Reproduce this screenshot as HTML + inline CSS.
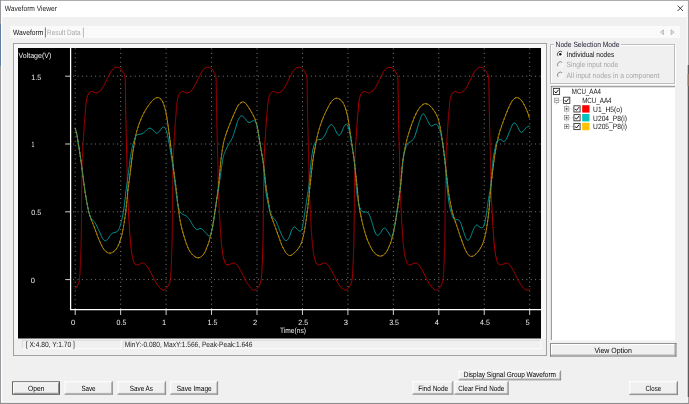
<!DOCTYPE html>
<html><head><meta charset="utf-8"><title>Waveform Viewer</title>
<style>
html,body{margin:0;padding:0;background:#f0f0f0;overflow:hidden}
svg{display:block;font-family:"Liberation Sans",sans-serif;will-change:transform}
text{font-family:"Liberation Sans",sans-serif;text-rendering:geometricPrecision}
</style></head>
<body>
<svg width="689" height="404" viewBox="0 0 689 404">
<rect x="0" y="0" width="689" height="404" fill="#f0f0f0" />
<rect x="0" y="0" width="689" height="17" fill="#ffffff" />
<rect x="0" y="0" width="2.2" height="404" fill="#ffffff" />
<rect x="686.8" y="0" width="2.2" height="404" fill="#ffffff" />
<rect x="0" y="401.6" width="689" height="2.4" fill="#ffffff" />
<rect x="0" y="0" width="689" height="0.8" fill="#999999" />
<rect x="0" y="0" width="0.9" height="404" fill="#8c9096" />
<rect x="0" y="24" width="1.0" height="42" fill="#5f7f9f" />
<rect x="687.9" y="0" width="1.1" height="404" fill="#a4a4a4" />
<rect x="687.7" y="65" width="1.3" height="332" fill="#5c5c5c" />
<rect x="687.7" y="74" width="1.3" height="12" fill="#8a7460" />
<rect x="0" y="402.8" width="689" height="1.2" fill="#909090" />
<text x="4.8" y="10.9" font-size="7.6" fill="#1a1a1a" textLength="52.2" lengthAdjust="spacingAndGlyphs" >Waveform Viewer</text>
<path d="M677.6 5.6 L683 11 M683 5.6 L677.6 11" stroke="#111" stroke-width="0.8" fill="none"/>
<rect x="10" y="26" width="670" height="12" fill="#fafafa" />
<text x="13.0" y="35.0" font-size="7.6" fill="#111" textLength="30.3" lengthAdjust="spacingAndGlyphs" >Waveform</text>
<line x1="45.4" y1="27.5" x2="45.4" y2="37.5" stroke="#555" stroke-width="0.8" />
<text x="47.0" y="35.0" font-size="7.6" fill="#a6a6a6" textLength="33.5" lengthAdjust="spacingAndGlyphs" >Result Data</text>
<line x1="83.4" y1="27.5" x2="83.4" y2="37.5" stroke="#aaa" stroke-width="0.8" />
<path d="M663.4 29.9 L660.6 32.2 L663.4 34.5 Z" fill="#f4f4f4" stroke="#8a8a8a" stroke-width="0.6"/>
<path d="M671.2 29.9 L674 32.2 L671.2 34.5 Z" fill="#f4f4f4" stroke="#8a8a8a" stroke-width="0.6"/>
<rect x="13.5" y="43.5" width="533" height="312" fill="#f0f0f0" stroke="#a0a0a0" stroke-width="1"/>
<rect x="14" y="44" width="532" height="295" fill="#f8f8f8" />
<rect x="18" y="48" width="523" height="290.5" fill="#000" />
<line x1="75.20" y1="48.5" x2="75.20" y2="309" stroke="#989898" stroke-width="0.9" stroke-dasharray="0.9 3.5"/>
<line x1="120.65" y1="48.5" x2="120.65" y2="309" stroke="#989898" stroke-width="0.9" stroke-dasharray="0.9 3.5"/>
<line x1="166.10" y1="48.5" x2="166.10" y2="309" stroke="#989898" stroke-width="0.9" stroke-dasharray="0.9 3.5"/>
<line x1="211.55" y1="48.5" x2="211.55" y2="309" stroke="#989898" stroke-width="0.9" stroke-dasharray="0.9 3.5"/>
<line x1="257.00" y1="48.5" x2="257.00" y2="309" stroke="#989898" stroke-width="0.9" stroke-dasharray="0.9 3.5"/>
<line x1="302.45" y1="48.5" x2="302.45" y2="309" stroke="#989898" stroke-width="0.9" stroke-dasharray="0.9 3.5"/>
<line x1="347.90" y1="48.5" x2="347.90" y2="309" stroke="#989898" stroke-width="0.9" stroke-dasharray="0.9 3.5"/>
<line x1="393.35" y1="48.5" x2="393.35" y2="309" stroke="#989898" stroke-width="0.9" stroke-dasharray="0.9 3.5"/>
<line x1="438.80" y1="48.5" x2="438.80" y2="309" stroke="#989898" stroke-width="0.9" stroke-dasharray="0.9 3.5"/>
<line x1="484.25" y1="48.5" x2="484.25" y2="309" stroke="#989898" stroke-width="0.9" stroke-dasharray="0.9 3.5"/>
<line x1="529.70" y1="48.5" x2="529.70" y2="309" stroke="#989898" stroke-width="0.9" stroke-dasharray="0.9 3.5"/>
<line x1="71" y1="279.60" x2="541" y2="279.60" stroke="#989898" stroke-width="0.9" stroke-dasharray="0.9 3.5" stroke-dashoffset="-2.2"/>
<line x1="71" y1="211.80" x2="541" y2="211.80" stroke="#989898" stroke-width="0.9" stroke-dasharray="0.9 3.5" stroke-dashoffset="-2.2"/>
<line x1="71" y1="144.00" x2="541" y2="144.00" stroke="#989898" stroke-width="0.9" stroke-dasharray="0.9 3.5" stroke-dashoffset="-2.2"/>
<line x1="71" y1="76.20" x2="541" y2="76.20" stroke="#989898" stroke-width="0.9" stroke-dasharray="0.9 3.5" stroke-dashoffset="-2.2"/>
<line x1="70.6" y1="48" x2="70.6" y2="310.1" stroke="#fff" stroke-width="1.25" />
<line x1="70" y1="309.5" x2="541" y2="309.5" stroke="#fff" stroke-width="1.25" />
<line x1="75.20" y1="310" x2="75.20" y2="315" stroke="#e8e8e8" stroke-width="0.9" />
<line x1="120.65" y1="310" x2="120.65" y2="315" stroke="#e8e8e8" stroke-width="0.9" />
<line x1="166.10" y1="310" x2="166.10" y2="315" stroke="#e8e8e8" stroke-width="0.9" />
<line x1="211.55" y1="310" x2="211.55" y2="315" stroke="#e8e8e8" stroke-width="0.9" />
<line x1="257.00" y1="310" x2="257.00" y2="315" stroke="#e8e8e8" stroke-width="0.9" />
<line x1="302.45" y1="310" x2="302.45" y2="315" stroke="#e8e8e8" stroke-width="0.9" />
<line x1="347.90" y1="310" x2="347.90" y2="315" stroke="#e8e8e8" stroke-width="0.9" />
<line x1="393.35" y1="310" x2="393.35" y2="315" stroke="#e8e8e8" stroke-width="0.9" />
<line x1="438.80" y1="310" x2="438.80" y2="315" stroke="#e8e8e8" stroke-width="0.9" />
<line x1="484.25" y1="310" x2="484.25" y2="315" stroke="#e8e8e8" stroke-width="0.9" />
<line x1="529.70" y1="310" x2="529.70" y2="315" stroke="#e8e8e8" stroke-width="0.9" />
<line x1="65.2" y1="279.60" x2="70" y2="279.60" stroke="#e8e8e8" stroke-width="0.9" />
<line x1="65.2" y1="211.80" x2="70" y2="211.80" stroke="#e8e8e8" stroke-width="0.9" />
<line x1="65.2" y1="144.00" x2="70" y2="144.00" stroke="#e8e8e8" stroke-width="0.9" />
<line x1="65.2" y1="76.20" x2="70" y2="76.20" stroke="#e8e8e8" stroke-width="0.9" />
<text x="18.5" y="58.1" font-size="7.6" fill="#f0f0f0" textLength="32.8" lengthAdjust="spacingAndGlyphs" >Voltage(V)</text>
<text x="31.2" y="79.6" font-size="7.6" fill="#f0f0f0" textLength="10.0" lengthAdjust="spacingAndGlyphs" >1.5</text>
<text x="31.5" y="147.4" font-size="7.6" fill="#f0f0f0" textLength="2.9" lengthAdjust="spacingAndGlyphs" >1</text>
<text x="31.2" y="215.2" font-size="7.6" fill="#f0f0f0" textLength="10.0" lengthAdjust="spacingAndGlyphs" >0.5</text>
<text x="30.8" y="283.0" font-size="7.6" fill="#f0f0f0" textLength="4.2" lengthAdjust="spacingAndGlyphs" >0</text>
<text x="71.1" y="324.6" font-size="7.6" fill="#f0f0f0" textLength="4.2" lengthAdjust="spacingAndGlyphs" >0</text>
<text x="116.6" y="324.6" font-size="7.6" fill="#f0f0f0" textLength="9.8" lengthAdjust="spacingAndGlyphs" >0.5</text>
<text x="162.0" y="324.6" font-size="7.6" fill="#f0f0f0" textLength="4.2" lengthAdjust="spacingAndGlyphs" >1</text>
<text x="207.5" y="324.6" font-size="7.6" fill="#f0f0f0" textLength="9.8" lengthAdjust="spacingAndGlyphs" >1.5</text>
<text x="252.9" y="324.6" font-size="7.6" fill="#f0f0f0" textLength="4.2" lengthAdjust="spacingAndGlyphs" >2</text>
<text x="298.3" y="324.6" font-size="7.6" fill="#f0f0f0" textLength="9.8" lengthAdjust="spacingAndGlyphs" >2.5</text>
<text x="343.8" y="324.6" font-size="7.6" fill="#f0f0f0" textLength="4.2" lengthAdjust="spacingAndGlyphs" >3</text>
<text x="389.2" y="324.6" font-size="7.6" fill="#f0f0f0" textLength="9.8" lengthAdjust="spacingAndGlyphs" >3.5</text>
<text x="434.7" y="324.6" font-size="7.6" fill="#f0f0f0" textLength="4.2" lengthAdjust="spacingAndGlyphs" >4</text>
<text x="480.1" y="324.6" font-size="7.6" fill="#f0f0f0" textLength="9.8" lengthAdjust="spacingAndGlyphs" >4.5</text>
<text x="525.6" y="324.6" font-size="7.6" fill="#f0f0f0" textLength="4.2" lengthAdjust="spacingAndGlyphs" >5</text>
<text x="280.0" y="333.1" font-size="7.6" fill="#f0f0f0" textLength="25.9" lengthAdjust="spacingAndGlyphs" >Time(ns)</text>
<g fill="none" stroke-width="1.0" stroke-linejoin="round" stroke-linecap="round">
<path d="M75.2 288.5 L75.9 287.7 L76.5 287.0 L77.1 286.1 L77.6 285.3 L78.0 284.4 L78.5 283.5 L78.8 282.5 L79.1 281.6 L79.2 280.6 L79.4 279.6 L79.5 278.6 L79.6 277.6 L79.7 276.6 L79.8 275.6 L79.9 274.6 L80.0 273.6 L80.0 272.6 L80.1 271.6 L80.1 270.6 L80.2 269.6 L80.2 268.6 L80.2 267.6 L80.3 266.6 L80.3 265.6 L80.4 264.6 L80.4 263.6 L80.5 262.6 L80.5 261.6 L80.5 260.6 L80.6 259.6 L80.6 258.6 L80.7 257.6 L80.7 256.6 L80.7 255.6 L80.8 254.6 L80.8 253.6 L80.8 252.6 L80.9 251.6 L80.9 250.6 L80.9 249.6 L81.0 248.6 L81.0 247.6 L81.0 246.6 L81.1 245.6 L81.1 244.6 L81.1 243.6 L81.1 242.6 L81.2 241.6 L81.2 240.6 L81.2 239.6 L81.2 238.6 L81.2 237.6 L81.3 236.6 L81.3 235.6 L81.3 234.6 L81.3 233.6 L81.3 232.6 L81.3 231.6 L81.3 230.6 L81.4 229.6 L81.4 228.6 L81.4 227.7 L81.4 226.7 L81.4 225.7 L81.4 224.7 L81.4 223.7 L81.4 222.7 L81.4 221.7 L81.4 220.7 L81.5 219.7 L81.5 218.7 L81.5 217.7 L81.5 216.7 L81.5 215.7 L81.5 214.7 L81.5 213.7 L81.5 212.7 L81.5 211.7 L81.5 210.7 L81.5 209.7 L81.5 208.7 L81.5 207.7 L81.5 206.7 L81.5 205.7 L81.6 204.7 L81.6 203.7 L81.6 202.7 L81.6 201.7 L81.6 200.7 L81.6 199.7 L81.6 198.7 L81.6 197.7 L81.6 196.7 L81.6 195.7 L81.6 194.7 L81.7 193.7 L81.7 192.7 L81.7 191.7 L81.7 190.7 L81.7 189.7 L81.7 188.7 L81.7 187.7 L81.7 186.7 L81.8 185.7 L81.8 184.7 L81.8 183.7 L81.8 182.7 L81.8 181.7 L81.8 180.7 L81.9 179.7 L81.9 178.7 L81.9 177.7 L81.9 176.7 L81.9 175.7 L81.9 174.7 L82.0 173.7 L82.0 172.7 L82.0 171.7 L82.0 170.7 L82.0 169.7 L82.1 168.7 L82.1 167.7 L82.1 166.7 L82.1 165.7 L82.2 164.7 L82.2 163.7 L82.2 162.7 L82.3 161.7 L82.3 160.7 L82.3 159.7 L82.3 158.7 L82.4 157.7 L82.4 156.7 L82.5 155.7 L82.5 154.7 L82.5 153.7 L82.6 152.7 L82.6 151.7 L82.7 150.7 L82.7 149.7 L82.8 148.7 L82.8 147.7 L82.9 146.7 L83.0 145.7 L83.0 144.7 L83.1 143.7 L83.1 142.7 L83.2 141.7 L83.3 140.7 L83.3 139.7 L83.4 138.7 L83.5 137.7 L83.5 136.7 L83.6 135.7 L83.7 134.7 L83.7 133.7 L83.8 132.7 L83.9 131.7 L83.9 130.7 L84.0 129.7 L84.0 128.7 L84.1 127.7 L84.2 126.7 L84.2 125.7 L84.3 124.7 L84.4 123.7 L84.4 122.7 L84.5 121.7 L84.6 120.7 L84.7 119.7 L84.7 118.7 L84.8 117.7 L84.9 116.7 L85.0 115.7 L85.1 114.7 L85.1 113.7 L85.2 112.8 L85.3 111.8 L85.4 110.8 L85.5 109.8 L85.6 108.8 L85.7 107.8 L85.7 106.8 L85.8 105.8 L85.9 104.8 L86.0 103.8 L86.1 102.8 L86.2 101.8 L86.4 100.8 L86.6 99.8 L86.8 98.9 L87.0 97.9 L87.2 96.9 L87.5 95.9 L87.9 95.0 L88.3 94.1 L88.9 93.2 L89.6 92.5 L90.4 91.9 L91.3 91.6 L92.2 91.6 L93.2 91.9 L94.1 92.4 L95.1 92.8 L96.1 92.9 L97.0 92.7 L97.9 92.4 L98.8 91.9 L99.7 91.4 L100.5 90.7 L101.1 89.9 L101.7 89.0 L102.3 88.2 L102.8 87.4 L103.3 86.5 L103.8 85.6 L104.2 84.8 L104.7 83.9 L105.2 83.0 L105.6 82.1 L106.1 81.2 L106.5 80.3 L106.9 79.4 L107.4 78.5 L107.8 77.6 L108.2 76.7 L108.7 75.8 L109.1 75.0 L109.6 74.1 L110.1 73.2 L110.5 72.3 L111.0 71.5 L111.6 70.7 L112.2 69.9 L112.9 69.2 L113.8 68.5 L114.7 67.9 L115.6 67.5 L116.5 67.3 L117.5 67.3 L118.4 67.5 L119.3 67.9 L120.2 68.5 L121.0 69.2 L121.7 70.0 L122.2 70.8 L122.7 71.7 L123.2 72.5 L123.7 73.4 L124.3 74.2 L124.7 75.1 L124.9 76.1 L125.1 77.1 L125.1 78.1 L125.2 79.1 L125.2 80.1 L125.3 81.1 L125.3 82.1 L125.3 83.1 L125.3 84.1 L125.3 85.1 L125.4 86.1 L125.4 87.1 L125.4 88.1 L125.4 89.1 L125.4 90.1 L125.4 91.1 L125.4 92.1 L125.4 93.1 L125.5 94.1 L125.5 95.1 L125.5 96.1 L125.5 97.1 L125.5 98.1 L125.5 99.1 L125.5 100.1 L125.6 101.1 L125.6 102.1 L125.6 103.1 L125.6 104.1 L125.6 105.1 L125.6 106.1 L125.6 107.1 L125.7 108.1 L125.7 109.1 L125.7 110.1 L125.7 111.1 L125.7 112.1 L125.7 113.1 L125.8 114.1 L125.8 115.1 L125.8 116.1 L125.8 117.1 L125.8 118.1 L125.9 119.1 L125.9 120.1 L125.9 121.1 L125.9 122.1 L126.0 123.1 L126.0 124.1 L126.0 125.1 L126.0 126.1 L126.0 127.1 L126.1 128.1 L126.1 129.1 L126.1 130.1 L126.1 131.1 L126.2 132.1 L126.2 133.1 L126.2 134.1 L126.2 135.1 L126.3 136.1 L126.3 137.1 L126.3 138.1 L126.3 139.1 L126.4 140.1 L126.4 141.1 L126.4 142.1 L126.4 143.1 L126.5 144.1 L126.5 145.1 L126.5 146.1 L126.5 147.0 L126.6 148.0 L126.6 149.0 L126.6 150.0 L126.6 151.0 L126.7 152.0 L126.7 153.0 L126.7 154.0 L126.8 155.0 L126.8 156.0 L126.8 157.0 L126.8 158.0 L126.9 159.0 L126.9 160.0 L126.9 161.0 L126.9 162.0 L127.0 163.0 L127.0 164.0 L127.0 165.0 L127.0 166.0 L127.0 167.0 L127.1 168.0 L127.1 169.0 L127.1 170.0 L127.1 171.0 L127.1 172.0 L127.1 173.0 L127.2 174.0 L127.2 175.0 L127.2 176.0 L127.2 177.0 L127.2 178.0 L127.2 179.0 L127.2 180.0 L127.3 181.0 L127.3 182.0 L127.3 183.0 L127.3 184.0 L127.4 185.0 L127.4 186.0 L127.4 187.0 L127.4 188.0 L127.5 189.0 L127.5 190.0 L127.5 191.0 L127.6 192.0 L127.6 193.0 L127.7 194.0 L127.7 195.0 L127.7 196.0 L127.8 197.0 L127.8 198.0 L127.9 199.0 L127.9 200.0 L128.0 201.0 L128.0 202.0 L128.1 203.0 L128.1 204.0 L128.2 205.0 L128.2 206.0 L128.3 207.0 L128.3 208.0 L128.4 209.0 L128.4 210.0 L128.5 211.0 L128.5 212.0 L128.6 213.0 L128.6 214.0 L128.7 215.0 L128.7 216.0 L128.8 217.0 L128.8 218.0 L128.9 219.0 L128.9 220.0 L129.0 221.0 L129.1 222.0 L129.1 223.0 L129.2 224.0 L129.2 225.0 L129.3 226.0 L129.3 227.0 L129.4 228.0 L129.5 229.0 L129.5 230.0 L129.6 231.0 L129.7 232.0 L129.7 233.0 L129.8 234.0 L129.9 235.0 L129.9 236.0 L130.0 237.0 L130.1 238.0 L130.2 239.0 L130.3 240.0 L130.3 241.0 L130.4 242.0 L130.5 243.0 L130.6 243.9 L130.7 244.9 L130.8 245.9 L130.9 246.9 L131.0 247.9 L131.1 248.9 L131.3 249.9 L131.4 250.9 L131.6 251.9 L131.7 252.9 L131.8 253.9 L132.0 254.9 L132.2 255.8 L132.4 256.8 L132.6 257.8 L132.8 258.8 L133.1 259.7 L133.4 260.7 L133.7 261.7 L134.0 262.6 L134.5 263.5 L135.1 264.3 L135.9 264.8 L136.8 265.0 L137.8 264.8 L138.8 264.5 L139.7 264.1 L140.6 263.6 L141.5 263.2 L142.4 263.0 L143.4 263.1 L144.3 263.5 L145.2 264.1 L145.9 264.8 L146.6 265.5 L147.2 266.3 L147.7 267.2 L148.2 268.0 L148.7 268.9 L149.2 269.7 L149.7 270.6 L150.2 271.5 L150.7 272.4 L151.2 273.2 L151.6 274.1 L152.1 275.0 L152.5 275.9 L152.9 276.8 L153.4 277.7 L153.8 278.6 L154.2 279.5 L154.7 280.4 L155.2 281.3 L155.6 282.2 L156.2 283.0 L156.7 283.9 L157.3 284.7 L157.9 285.5 L158.5 286.3 L159.1 287.1 L159.7 287.8 L160.4 288.5 L161.2 289.2 L162.1 289.8 L163.0 290.1 L163.9 290.1 L164.7 289.7 L165.5 289.0 L166.3 288.3 L166.9 287.5 L167.6 286.7 L168.1 285.9 L168.6 285.0 L169.1 284.1 L169.5 283.2 L169.8 282.3 L170.0 281.3 L170.2 280.3 L170.3 279.3 L170.4 278.3 L170.5 277.3 L170.6 276.3 L170.7 275.3 L170.8 274.4 L170.9 273.4 L170.9 272.4 L171.0 271.4 L171.0 270.4 L171.1 269.4 L171.1 268.4 L171.2 267.4 L171.2 266.4 L171.2 265.4 L171.3 264.4 L171.3 263.4 L171.4 262.4 L171.4 261.4 L171.5 260.4 L171.5 259.4 L171.5 258.4 L171.6 257.4 L171.6 256.4 L171.6 255.4 L171.7 254.4 L171.7 253.4 L171.7 252.4 L171.8 251.4 L171.8 250.4 L171.8 249.4 L171.9 248.4 L171.9 247.4 L171.9 246.4 L172.0 245.4 L172.0 244.4 L172.0 243.4 L172.0 242.4 L172.1 241.4 L172.1 240.4 L172.1 239.4 L172.1 238.4 L172.1 237.4 L172.2 236.4 L172.2 235.4 L172.2 234.4 L172.2 233.4 L172.2 232.4 L172.2 231.4 L172.2 230.4 L172.3 229.4 L172.3 228.4 L172.3 227.4 L172.3 226.4 L172.3 225.4 L172.3 224.4 L172.3 223.4 L172.3 222.4 L172.3 221.4 L172.3 220.4 L172.4 219.4 L172.4 218.4 L172.4 217.4 L172.4 216.4 L172.4 215.4 L172.4 214.4 L172.4 213.4 L172.4 212.4 L172.4 211.4 L172.4 210.4 L172.4 209.4 L172.4 208.4 L172.4 207.4 L172.4 206.4 L172.5 205.4 L172.5 204.4 L172.5 203.4 L172.5 202.4 L172.5 201.4 L172.5 200.4 L172.5 199.4 L172.5 198.4 L172.5 197.4 L172.5 196.4 L172.5 195.4 L172.5 194.4 L172.6 193.4 L172.6 192.4 L172.6 191.4 L172.6 190.4 L172.6 189.4 L172.6 188.4 L172.6 187.4 L172.6 186.4 L172.7 185.4 L172.7 184.4 L172.7 183.4 L172.7 182.4 L172.7 181.4 L172.7 180.4 L172.8 179.4 L172.8 178.4 L172.8 177.4 L172.8 176.4 L172.8 175.4 L172.8 174.4 L172.9 173.4 L172.9 172.4 L172.9 171.4 L172.9 170.4 L173.0 169.4 L173.0 168.4 L173.0 167.4 L173.0 166.4 L173.0 165.4 L173.1 164.4 L173.1 163.4 L173.1 162.4 L173.2 161.4 L173.2 160.4 L173.2 159.4 L173.3 158.4 L173.3 157.4 L173.3 156.4 L173.4 155.4 L173.4 154.4 L173.5 153.4 L173.5 152.4 L173.6 151.4 L173.6 150.4 L173.7 149.4 L173.7 148.4 L173.8 147.4 L173.8 146.4 L173.9 145.4 L173.9 144.4 L174.0 143.4 L174.1 142.4 L174.1 141.4 L174.2 140.4 L174.2 139.4 L174.3 138.4 L174.4 137.4 L174.4 136.4 L174.5 135.4 L174.6 134.4 L174.6 133.4 L174.7 132.4 L174.8 131.4 L174.8 130.4 L174.9 129.4 L175.0 128.4 L175.0 127.4 L175.1 126.4 L175.2 125.4 L175.2 124.4 L175.3 123.4 L175.4 122.4 L175.4 121.5 L175.5 120.5 L175.6 119.5 L175.7 118.5 L175.7 117.5 L175.8 116.5 L175.9 115.5 L176.0 114.5 L176.1 113.5 L176.1 112.5 L176.2 111.5 L176.3 110.5 L176.4 109.5 L176.5 108.5 L176.6 107.5 L176.7 106.5 L176.8 105.5 L176.8 104.5 L176.9 103.5 L177.0 102.5 L177.2 101.5 L177.3 100.6 L177.5 99.6 L177.7 98.6 L177.9 97.6 L178.2 96.7 L178.5 95.7 L178.9 94.7 L179.3 93.8 L179.9 93.0 L180.7 92.3 L181.5 91.8 L182.4 91.5 L183.4 91.6 L184.3 92.1 L185.3 92.5 L186.3 92.9 L187.2 92.9 L188.1 92.6 L189.1 92.3 L190.0 91.8 L190.8 91.2 L191.5 90.5 L192.2 89.7 L192.8 88.8 L193.3 88.0 L193.9 87.1 L194.3 86.3 L194.8 85.4 L195.3 84.5 L195.7 83.7 L196.2 82.8 L196.6 81.9 L197.1 81.0 L197.5 80.1 L198.0 79.2 L198.4 78.3 L198.8 77.4 L199.3 76.5 L199.7 75.6 L200.2 74.7 L200.6 73.8 L201.1 73.0 L201.6 72.1 L202.1 71.3 L202.6 70.5 L203.3 69.7 L204.1 69.0 L204.9 68.3 L205.8 67.8 L206.8 67.4 L207.7 67.3 L208.6 67.3 L209.6 67.6 L210.5 68.0 L211.4 68.7 L212.1 69.4 L212.7 70.2 L213.3 71.0 L213.7 71.9 L214.2 72.7 L214.8 73.6 L215.3 74.5 L215.7 75.4 L215.9 76.3 L216.0 77.3 L216.1 78.3 L216.1 79.3 L216.1 80.3 L216.2 81.3 L216.2 82.3 L216.2 83.3 L216.2 84.3 L216.2 85.3 L216.3 86.3 L216.3 87.3 L216.3 88.3 L216.3 89.3 L216.3 90.3 L216.3 91.3 L216.3 92.3 L216.3 93.3 L216.4 94.3 L216.4 95.3 L216.4 96.3 L216.4 97.3 L216.4 98.3 L216.4 99.3 L216.4 100.3 L216.5 101.3 L216.5 102.3 L216.5 103.3 L216.5 104.3 L216.5 105.3 L216.5 106.3 L216.5 107.3 L216.6 108.3 L216.6 109.3 L216.6 110.3 L216.6 111.3 L216.6 112.3 L216.6 113.3 L216.7 114.3 L216.7 115.3 L216.7 116.3 L216.7 117.3 L216.7 118.3 L216.8 119.3 L216.8 120.3 L216.8 121.3 L216.8 122.3 L216.9 123.3 L216.9 124.3 L216.9 125.3 L216.9 126.3 L216.9 127.3 L217.0 128.3 L217.0 129.3 L217.0 130.3 L217.0 131.3 L217.1 132.3 L217.1 133.3 L217.1 134.3 L217.1 135.3 L217.2 136.3 L217.2 137.3 L217.2 138.3 L217.2 139.3 L217.3 140.3 L217.3 141.3 L217.3 142.3 L217.3 143.3 L217.4 144.3 L217.4 145.3 L217.4 146.3 L217.4 147.3 L217.5 148.3 L217.5 149.3 L217.5 150.3 L217.6 151.3 L217.6 152.3 L217.6 153.3 L217.6 154.3 L217.7 155.3 L217.7 156.3 L217.7 157.3 L217.8 158.3 L217.8 159.3 L217.8 160.3 L217.8 161.3 L217.9 162.3 L217.9 163.3 L217.9 164.3 L217.9 165.3 L217.9 166.3 L218.0 167.3 L218.0 168.3 L218.0 169.3 L218.0 170.3 L218.0 171.3 L218.0 172.3 L218.0 173.3 L218.1 174.3 L218.1 175.3 L218.1 176.3 L218.1 177.3 L218.1 178.3 L218.1 179.3 L218.2 180.3 L218.2 181.3 L218.2 182.3 L218.2 183.3 L218.2 184.3 L218.3 185.3 L218.3 186.3 L218.3 187.3 L218.3 188.3 L218.4 189.3 L218.4 190.3 L218.4 191.3 L218.5 192.3 L218.5 193.3 L218.6 194.3 L218.6 195.3 L218.7 196.3 L218.7 197.3 L218.8 198.3 L218.8 199.3 L218.8 200.3 L218.9 201.3 L218.9 202.3 L219.0 203.3 L219.0 204.3 L219.1 205.3 L219.1 206.3 L219.2 207.3 L219.2 208.3 L219.3 209.3 L219.3 210.3 L219.4 211.3 L219.4 212.3 L219.5 213.3 L219.5 214.3 L219.6 215.3 L219.6 216.3 L219.7 217.3 L219.8 218.3 L219.8 219.3 L219.9 220.3 L219.9 221.3 L220.0 222.3 L220.0 223.3 L220.1 224.3 L220.1 225.3 L220.2 226.3 L220.2 227.3 L220.3 228.3 L220.4 229.3 L220.4 230.3 L220.5 231.3 L220.6 232.3 L220.6 233.2 L220.7 234.2 L220.8 235.2 L220.9 236.2 L220.9 237.2 L221.0 238.2 L221.1 239.2 L221.2 240.2 L221.3 241.2 L221.3 242.2 L221.4 243.2 L221.5 244.2 L221.6 245.2 L221.7 246.2 L221.8 247.2 L222.0 248.2 L222.1 249.2 L222.2 250.2 L222.4 251.2 L222.5 252.2 L222.6 253.1 L222.8 254.1 L222.9 255.1 L223.1 256.1 L223.3 257.1 L223.6 258.0 L223.8 259.0 L224.1 260.0 L224.4 261.0 L224.7 261.9 L225.0 262.9 L225.5 263.8 L226.2 264.5 L227.0 264.9 L228.0 265.0 L229.0 264.7 L229.9 264.4 L230.8 263.9 L231.8 263.5 L232.7 263.1 L233.6 263.0 L234.5 263.2 L235.5 263.6 L236.3 264.3 L237.0 265.0 L237.7 265.8 L238.2 266.6 L238.8 267.4 L239.3 268.3 L239.8 269.1 L240.3 270.0 L240.8 270.8 L241.3 271.7 L241.7 272.6 L242.2 273.5 L242.6 274.4 L243.1 275.3 L243.5 276.2 L244.0 277.1 L244.4 278.0 L244.8 278.9 L245.3 279.8 L245.7 280.7 L246.2 281.6 L246.7 282.4 L247.2 283.3 L247.8 284.1 L248.3 284.9 L248.9 285.7 L249.5 286.5 L250.1 287.3 L250.8 288.0 L251.5 288.7 L252.4 289.4 L253.2 289.9 L254.2 290.1 L255.0 290.0 L255.9 289.5 L256.6 288.8 L257.4 288.1 L258.0 287.3 L258.6 286.5 L259.2 285.7 L259.6 284.8 L260.1 283.9 L260.5 283.0 L260.8 282.0 L261.0 281.0 L261.1 280.1 L261.2 279.1 L261.4 278.1 L261.5 277.1 L261.6 276.1 L261.6 275.1 L261.7 274.1 L261.8 273.1 L261.8 272.1 L261.9 271.1 L261.9 270.1 L262.0 269.1 L262.0 268.1 L262.1 267.1 L262.1 266.1 L262.2 265.1 L262.2 264.1 L262.2 263.1 L262.3 262.1 L262.3 261.1 L262.4 260.1 L262.4 259.1 L262.4 258.1 L262.5 257.1 L262.5 256.1 L262.6 255.1 L262.6 254.1 L262.6 253.1 L262.7 252.1 L262.7 251.1 L262.7 250.1 L262.8 249.1 L262.8 248.1 L262.8 247.1 L262.8 246.1 L262.9 245.1 L262.9 244.1 L262.9 243.1 L263.0 242.1 L263.0 241.1 L263.0 240.1 L263.0 239.1 L263.0 238.1 L263.1 237.1 L263.1 236.1 L263.1 235.1 L263.1 234.1 L263.1 233.1 L263.1 232.1 L263.1 231.1 L263.2 230.1 L263.2 229.1 L263.2 228.1 L263.2 227.1 L263.2 226.1 L263.2 225.1 L263.2 224.1 L263.2 223.1 L263.2 222.1 L263.2 221.1 L263.2 220.1 L263.3 219.1 L263.3 218.1 L263.3 217.1 L263.3 216.1 L263.3 215.1 L263.3 214.1 L263.3 213.1 L263.3 212.1 L263.3 211.1 L263.3 210.1 L263.3 209.1 L263.3 208.1 L263.3 207.1 L263.3 206.1 L263.4 205.1 L263.4 204.1 L263.4 203.1 L263.4 202.1 L263.4 201.1 L263.4 200.1 L263.4 199.1 L263.4 198.1 L263.4 197.1 L263.4 196.1 L263.4 195.1 L263.5 194.1 L263.5 193.1 L263.5 192.1 L263.5 191.1 L263.5 190.1 L263.5 189.1 L263.5 188.1 L263.5 187.1 L263.6 186.1 L263.6 185.1 L263.6 184.1 L263.6 183.1 L263.6 182.1 L263.6 181.1 L263.6 180.1 L263.7 179.1 L263.7 178.1 L263.7 177.1 L263.7 176.1 L263.7 175.1 L263.8 174.1 L263.8 173.1 L263.8 172.1 L263.8 171.1 L263.8 170.1 L263.9 169.1 L263.9 168.1 L263.9 167.1 L263.9 166.1 L264.0 165.1 L264.0 164.1 L264.0 163.1 L264.0 162.1 L264.1 161.1 L264.1 160.1 L264.1 159.1 L264.2 158.1 L264.2 157.1 L264.2 156.1 L264.3 155.1 L264.3 154.1 L264.4 153.1 L264.4 152.1 L264.5 151.1 L264.5 150.1 L264.6 149.1 L264.6 148.1 L264.7 147.1 L264.7 146.1 L264.8 145.1 L264.9 144.1 L264.9 143.1 L265.0 142.1 L265.0 141.1 L265.1 140.1 L265.2 139.1 L265.2 138.1 L265.3 137.2 L265.4 136.2 L265.4 135.2 L265.5 134.2 L265.6 133.2 L265.6 132.2 L265.7 131.2 L265.8 130.2 L265.8 129.2 L265.9 128.2 L265.9 127.2 L266.0 126.2 L266.1 125.2 L266.1 124.2 L266.2 123.2 L266.3 122.2 L266.3 121.2 L266.4 120.2 L266.5 119.2 L266.6 118.2 L266.7 117.2 L266.7 116.2 L266.8 115.2 L266.9 114.2 L267.0 113.2 L267.1 112.2 L267.2 111.2 L267.2 110.2 L267.3 109.2 L267.4 108.2 L267.5 107.2 L267.6 106.2 L267.7 105.2 L267.8 104.2 L267.9 103.2 L268.0 102.3 L268.1 101.3 L268.3 100.3 L268.5 99.3 L268.7 98.3 L268.9 97.4 L269.2 96.4 L269.5 95.4 L269.9 94.5 L270.4 93.6 L271.0 92.8 L271.8 92.2 L272.6 91.7 L273.6 91.5 L274.5 91.7 L275.5 92.2 L276.5 92.7 L277.4 92.9 L278.4 92.8 L279.3 92.5 L280.2 92.2 L281.1 91.7 L281.9 91.0 L282.6 90.2 L283.3 89.4 L283.9 88.6 L284.4 87.7 L284.9 86.9 L285.4 86.0 L285.8 85.2 L286.3 84.3 L286.7 83.4 L287.2 82.5 L287.7 81.6 L288.1 80.7 L288.5 79.9 L289.0 79.0 L289.4 78.1 L289.8 77.2 L290.3 76.3 L290.7 75.4 L291.2 74.5 L291.7 73.6 L292.1 72.7 L292.6 71.9 L293.1 71.1 L293.7 70.3 L294.4 69.5 L295.2 68.8 L296.1 68.1 L297.0 67.7 L297.9 67.4 L298.8 67.3 L299.8 67.4 L300.7 67.7 L301.6 68.2 L302.5 68.9 L303.2 69.6 L303.8 70.4 L304.3 71.3 L304.8 72.1 L305.3 73.0 L305.8 73.8 L306.3 74.7 L306.7 75.6 L306.8 76.6 L306.9 77.6 L307.0 78.6 L307.0 79.6 L307.0 80.6 L307.1 81.6 L307.1 82.6 L307.1 83.6 L307.1 84.6 L307.1 85.6 L307.2 86.6 L307.2 87.6 L307.2 88.6 L307.2 89.6 L307.2 90.6 L307.2 91.6 L307.2 92.6 L307.3 93.6 L307.3 94.6 L307.3 95.6 L307.3 96.6 L307.3 97.6 L307.3 98.6 L307.3 99.6 L307.3 100.6 L307.4 101.6 L307.4 102.6 L307.4 103.6 L307.4 104.6 L307.4 105.6 L307.4 106.6 L307.4 107.6 L307.5 108.6 L307.5 109.6 L307.5 110.6 L307.5 111.6 L307.5 112.6 L307.6 113.6 L307.6 114.6 L307.6 115.6 L307.6 116.6 L307.6 117.6 L307.7 118.6 L307.7 119.6 L307.7 120.6 L307.7 121.6 L307.7 122.6 L307.8 123.6 L307.8 124.6 L307.8 125.6 L307.8 126.6 L307.9 127.6 L307.9 128.6 L307.9 129.6 L307.9 130.6 L307.9 131.6 L308.0 132.6 L308.0 133.6 L308.0 134.6 L308.0 135.6 L308.1 136.6 L308.1 137.6 L308.1 138.6 L308.1 139.6 L308.2 140.6 L308.2 141.6 L308.2 142.6 L308.2 143.6 L308.3 144.6 L308.3 145.6 L308.3 146.6 L308.4 147.6 L308.4 148.6 L308.4 149.6 L308.4 150.6 L308.5 151.6 L308.5 152.6 L308.5 153.6 L308.6 154.6 L308.6 155.6 L308.6 156.6 L308.6 157.6 L308.7 158.6 L308.7 159.6 L308.7 160.6 L308.7 161.6 L308.8 162.6 L308.8 163.6 L308.8 164.6 L308.8 165.6 L308.8 166.6 L308.9 167.6 L308.9 168.6 L308.9 169.6 L308.9 170.6 L308.9 171.6 L308.9 172.6 L308.9 173.6 L309.0 174.6 L309.0 175.6 L309.0 176.6 L309.0 177.6 L309.0 178.6 L309.0 179.6 L309.1 180.6 L309.1 181.6 L309.1 182.6 L309.1 183.6 L309.1 184.6 L309.2 185.6 L309.2 186.6 L309.2 187.6 L309.3 188.6 L309.3 189.6 L309.3 190.6 L309.4 191.6 L309.4 192.6 L309.4 193.6 L309.5 194.6 L309.5 195.6 L309.6 196.6 L309.6 197.6 L309.7 198.6 L309.7 199.6 L309.8 200.6 L309.8 201.6 L309.9 202.6 L309.9 203.6 L310.0 204.6 L310.0 205.6 L310.1 206.6 L310.1 207.6 L310.2 208.6 L310.2 209.6 L310.3 210.6 L310.3 211.6 L310.4 212.6 L310.4 213.6 L310.5 214.6 L310.5 215.5 L310.6 216.5 L310.6 217.5 L310.7 218.5 L310.7 219.5 L310.8 220.5 L310.8 221.5 L310.9 222.5 L310.9 223.5 L311.0 224.5 L311.0 225.5 L311.1 226.5 L311.2 227.5 L311.2 228.5 L311.3 229.5 L311.4 230.5 L311.4 231.5 L311.5 232.5 L311.6 233.5 L311.6 234.5 L311.7 235.5 L311.8 236.5 L311.9 237.5 L311.9 238.5 L312.0 239.5 L312.1 240.5 L312.2 241.5 L312.3 242.5 L312.3 243.5 L312.4 244.5 L312.5 245.5 L312.6 246.5 L312.8 247.5 L312.9 248.5 L313.0 249.4 L313.2 250.4 L313.3 251.4 L313.4 252.4 L313.6 253.4 L313.7 254.4 L313.9 255.4 L314.1 256.4 L314.3 257.3 L314.5 258.3 L314.8 259.3 L315.0 260.2 L315.3 261.2 L315.7 262.2 L316.1 263.1 L316.6 264.0 L317.3 264.6 L318.2 265.0 L319.1 264.9 L320.1 264.7 L321.1 264.3 L322.0 263.8 L322.9 263.4 L323.8 263.1 L324.8 263.0 L325.7 263.3 L326.6 263.8 L327.4 264.5 L328.1 265.2 L328.7 266.0 L329.3 266.8 L329.8 267.6 L330.3 268.5 L330.8 269.3 L331.3 270.2 L331.8 271.1 L332.3 272.0 L332.8 272.8 L333.2 273.7 L333.7 274.6 L334.1 275.5 L334.5 276.4 L335.0 277.3 L335.4 278.2 L335.8 279.1 L336.3 280.0 L336.7 280.9 L337.2 281.8 L337.7 282.7 L338.2 283.5 L338.8 284.3 L339.4 285.1 L340.0 286.0 L340.6 286.7 L341.2 287.5 L341.9 288.2 L342.7 288.9 L343.5 289.5 L344.4 290.0 L345.3 290.1 L346.2 289.9 L347.0 289.3 L347.7 288.6 L348.4 287.9 L349.1 287.1 L349.7 286.3 L350.2 285.5 L350.7 284.6 L351.1 283.6 L351.4 282.7 L351.7 281.8 L351.9 280.8 L352.1 279.8 L352.2 278.8 L352.3 277.8 L352.4 276.8 L352.5 275.8 L352.6 274.8 L352.6 273.8 L352.7 272.8 L352.8 271.8 L352.8 270.8 L352.9 269.8 L352.9 268.8 L352.9 267.8 L353.0 266.8 L353.0 265.8 L353.1 264.8 L353.1 263.8 L353.2 262.8 L353.2 261.8 L353.2 260.8 L353.3 259.8 L353.3 258.8 L353.4 257.8 L353.4 256.8 L353.4 255.8 L353.5 254.8 L353.5 253.8 L353.5 252.8 L353.6 251.8 L353.6 250.8 L353.6 249.8 L353.7 248.8 L353.7 247.8 L353.7 246.8 L353.8 245.8 L353.8 244.8 L353.8 243.8 L353.8 242.8 L353.9 241.8 L353.9 240.8 L353.9 239.8 L353.9 238.8 L353.9 237.8 L354.0 236.8 L354.0 235.8 L354.0 234.8 L354.0 233.8 L354.0 232.8 L354.0 231.8 L354.0 230.8 L354.1 229.8 L354.1 228.8 L354.1 227.8 L354.1 226.8 L354.1 225.8 L354.1 224.8 L354.1 223.8 L354.1 222.8 L354.1 221.8 L354.1 220.8 L354.2 219.8 L354.2 218.8 L354.2 217.8 L354.2 216.8 L354.2 215.8 L354.2 214.8 L354.2 213.8 L354.2 212.8 L354.2 211.8 L354.2 210.8 L354.2 209.8 L354.2 208.8 L354.2 207.8 L354.2 206.8 L354.2 205.8 L354.3 204.8 L354.3 203.8 L354.3 202.8 L354.3 201.8 L354.3 200.8 L354.3 199.8 L354.3 198.8 L354.3 197.8 L354.3 196.8 L354.3 195.8 L354.3 194.8 L354.4 193.8 L354.4 192.8 L354.4 191.8 L354.4 190.8 L354.4 189.8 L354.4 188.8 L354.4 187.8 L354.4 186.8 L354.5 185.8 L354.5 184.8 L354.5 183.8 L354.5 182.8 L354.5 181.8 L354.5 180.8 L354.5 179.8 L354.6 178.8 L354.6 177.8 L354.6 176.8 L354.6 175.8 L354.6 174.8 L354.7 173.8 L354.7 172.8 L354.7 171.8 L354.7 170.8 L354.7 169.8 L354.8 168.8 L354.8 167.8 L354.8 166.8 L354.8 165.8 L354.9 164.8 L354.9 163.8 L354.9 162.8 L354.9 161.8 L355.0 160.8 L355.0 159.8 L355.0 158.8 L355.1 157.8 L355.1 156.9 L355.1 155.9 L355.2 154.9 L355.2 153.9 L355.3 152.9 L355.3 151.9 L355.4 150.9 L355.4 149.9 L355.5 148.9 L355.5 147.9 L355.6 146.9 L355.7 145.9 L355.7 144.9 L355.8 143.9 L355.8 142.9 L355.9 141.9 L356.0 140.9 L356.0 139.9 L356.1 138.9 L356.1 137.9 L356.2 136.9 L356.3 135.9 L356.3 134.9 L356.4 133.9 L356.5 132.9 L356.5 131.9 L356.6 130.9 L356.7 129.9 L356.7 128.9 L356.8 127.9 L356.9 126.9 L356.9 125.9 L357.0 124.9 L357.1 123.9 L357.1 122.9 L357.2 121.9 L357.3 120.9 L357.3 119.9 L357.4 118.9 L357.5 117.9 L357.6 116.9 L357.7 115.9 L357.7 114.9 L357.8 113.9 L357.9 112.9 L358.0 111.9 L358.1 110.9 L358.2 110.0 L358.3 109.0 L358.3 108.0 L358.4 107.0 L358.5 106.0 L358.6 105.0 L358.7 104.0 L358.8 103.0 L358.9 102.0 L359.1 101.0 L359.2 100.0 L359.4 99.1 L359.6 98.1 L359.9 97.1 L360.2 96.1 L360.5 95.2 L360.9 94.2 L361.4 93.4 L362.1 92.6 L362.9 92.0 L363.8 91.6 L364.7 91.5 L365.7 91.8 L366.6 92.3 L367.6 92.7 L368.6 92.9 L369.5 92.8 L370.5 92.4 L371.4 92.0 L372.2 91.5 L373.0 90.8 L373.7 90.0 L374.3 89.2 L374.9 88.4 L375.4 87.5 L375.9 86.7 L376.4 85.8 L376.8 84.9 L377.3 84.1 L377.8 83.2 L378.2 82.3 L378.7 81.4 L379.1 80.5 L379.6 79.6 L380.0 78.7 L380.4 77.8 L380.9 76.9 L381.3 76.0 L381.8 75.1 L382.2 74.2 L382.7 73.4 L383.1 72.5 L383.6 71.7 L384.2 70.8 L384.8 70.1 L385.5 69.3 L386.3 68.6 L387.2 68.0 L388.1 67.6 L389.1 67.3 L390.0 67.3 L390.9 67.4 L391.9 67.8 L392.8 68.3 L393.6 69.1 L394.3 69.8 L394.8 70.7 L395.3 71.5 L395.8 72.4 L396.3 73.2 L396.9 74.1 L397.3 75.0 L397.6 75.9 L397.8 76.9 L397.8 77.9 L397.9 78.9 L397.9 79.9 L398.0 80.9 L398.0 81.9 L398.0 82.9 L398.0 83.9 L398.0 84.9 L398.1 85.9 L398.1 86.9 L398.1 87.9 L398.1 88.9 L398.1 89.9 L398.1 90.9 L398.1 91.9 L398.1 92.9 L398.2 93.9 L398.2 94.9 L398.2 95.9 L398.2 96.9 L398.2 97.9 L398.2 98.9 L398.2 99.9 L398.3 100.9 L398.3 101.9 L398.3 102.9 L398.3 103.9 L398.3 104.9 L398.3 105.9 L398.3 106.9 L398.4 107.9 L398.4 108.9 L398.4 109.9 L398.4 110.9 L398.4 111.9 L398.4 112.9 L398.5 113.9 L398.5 114.9 L398.5 115.9 L398.5 116.9 L398.5 117.9 L398.6 118.9 L398.6 119.9 L398.6 120.9 L398.6 121.9 L398.6 122.9 L398.7 123.9 L398.7 124.9 L398.7 125.9 L398.7 126.9 L398.8 127.9 L398.8 128.9 L398.8 129.9 L398.8 130.9 L398.9 131.9 L398.9 132.9 L398.9 133.9 L398.9 134.9 L398.9 135.9 L399.0 136.9 L399.0 137.9 L399.0 138.9 L399.0 139.9 L399.1 140.9 L399.1 141.9 L399.1 142.9 L399.1 143.9 L399.2 144.9 L399.2 145.9 L399.2 146.9 L399.3 147.9 L399.3 148.9 L399.3 149.9 L399.3 150.9 L399.4 151.9 L399.4 152.9 L399.4 153.9 L399.5 154.9 L399.5 155.9 L399.5 156.9 L399.5 157.9 L399.6 158.9 L399.6 159.9 L399.6 160.9 L399.6 161.9 L399.7 162.9 L399.7 163.9 L399.7 164.9 L399.7 165.9 L399.7 166.9 L399.8 167.9 L399.8 168.9 L399.8 169.9 L399.8 170.9 L399.8 171.9 L399.8 172.9 L399.9 173.9 L399.9 174.9 L399.9 175.9 L399.9 176.9 L399.9 177.9 L399.9 178.9 L399.9 179.9 L400.0 180.9 L400.0 181.9 L400.0 182.9 L400.0 183.8 L400.0 184.8 L400.1 185.8 L400.1 186.8 L400.1 187.8 L400.2 188.8 L400.2 189.8 L400.2 190.8 L400.3 191.8 L400.3 192.8 L400.3 193.8 L400.4 194.8 L400.4 195.8 L400.5 196.8 L400.5 197.8 L400.6 198.8 L400.6 199.8 L400.7 200.8 L400.7 201.8 L400.8 202.8 L400.8 203.8 L400.9 204.8 L400.9 205.8 L401.0 206.8 L401.0 207.8 L401.1 208.8 L401.1 209.8 L401.2 210.8 L401.2 211.8 L401.3 212.8 L401.3 213.8 L401.4 214.8 L401.4 215.8 L401.5 216.8 L401.5 217.8 L401.6 218.8 L401.6 219.8 L401.7 220.8 L401.7 221.8 L401.8 222.8 L401.8 223.8 L401.9 224.8 L402.0 225.8 L402.0 226.8 L402.1 227.8 L402.1 228.8 L402.2 229.8 L402.3 230.8 L402.3 231.8 L402.4 232.8 L402.5 233.8 L402.6 234.8 L402.6 235.8 L402.7 236.8 L402.8 237.8 L402.9 238.8 L402.9 239.8 L403.0 240.8 L403.1 241.8 L403.2 242.8 L403.3 243.8 L403.4 244.8 L403.5 245.7 L403.6 246.7 L403.7 247.7 L403.8 248.7 L404.0 249.7 L404.1 250.7 L404.2 251.7 L404.4 252.7 L404.5 253.7 L404.7 254.7 L404.8 255.6 L405.0 256.6 L405.3 257.6 L405.5 258.6 L405.8 259.5 L406.0 260.5 L406.3 261.5 L406.7 262.4 L407.1 263.4 L407.7 264.2 L408.4 264.8 L409.3 265.0 L410.3 264.9 L411.3 264.6 L412.2 264.1 L413.1 263.7 L414.0 263.3 L415.0 263.0 L415.9 263.1 L416.8 263.4 L417.7 264.0 L418.5 264.7 L419.2 265.4 L419.8 266.2 L420.3 267.0 L420.8 267.9 L421.3 268.7 L421.9 269.6 L422.4 270.4 L422.8 271.3 L423.3 272.2 L423.8 273.1 L424.2 274.0 L424.7 274.9 L425.1 275.8 L425.6 276.7 L426.0 277.6 L426.4 278.5 L426.9 279.4 L427.3 280.3 L427.8 281.1 L428.3 282.0 L428.8 282.9 L429.3 283.7 L429.9 284.5 L430.4 285.4 L431.0 286.2 L431.7 287.0 L432.3 287.7 L433.0 288.4 L433.8 289.1 L434.6 289.7 L435.5 290.1 L436.4 290.1 L437.3 289.8 L438.1 289.2 L438.8 288.4 L439.5 287.7 L440.1 286.9 L440.7 286.1 L441.2 285.2 L441.7 284.3 L442.1 283.4 L442.4 282.5 L442.7 281.5 L442.9 280.5 L443.0 279.5 L443.1 278.5 L443.2 277.5 L443.3 276.5 L443.4 275.5 L443.5 274.5 L443.6 273.5 L443.6 272.5 L443.7 271.5 L443.7 270.6 L443.8 269.6 L443.8 268.6 L443.9 267.6 L443.9 266.6 L443.9 265.6 L444.0 264.6 L444.0 263.6 L444.1 262.6 L444.1 261.6 L444.1 260.6 L444.2 259.6 L444.2 258.6 L444.3 257.6 L444.3 256.6 L444.3 255.6 L444.4 254.6 L444.4 253.6 L444.4 252.6 L444.5 251.6 L444.5 250.6 L444.5 249.6 L444.6 248.6 L444.6 247.6 L444.6 246.6 L444.7 245.6 L444.7 244.6 L444.7 243.6 L444.7 242.6 L444.8 241.6 L444.8 240.6 L444.8 239.6 L444.8 238.6 L444.8 237.6 L444.9 236.6 L444.9 235.6 L444.9 234.6 L444.9 233.6 L444.9 232.6 L444.9 231.6 L444.9 230.6 L445.0 229.6 L445.0 228.6 L445.0 227.6 L445.0 226.6 L445.0 225.6 L445.0 224.6 L445.0 223.6 L445.0 222.6 L445.0 221.6 L445.0 220.6 L445.1 219.6 L445.1 218.6 L445.1 217.6 L445.1 216.6 L445.1 215.6 L445.1 214.6 L445.1 213.6 L445.1 212.6 L445.1 211.6 L445.1 210.6 L445.1 209.6 L445.1 208.6 L445.1 207.6 L445.1 206.6 L445.1 205.6 L445.2 204.6 L445.2 203.6 L445.2 202.6 L445.2 201.6 L445.2 200.6 L445.2 199.6 L445.2 198.6 L445.2 197.6 L445.2 196.6 L445.2 195.6 L445.2 194.6 L445.3 193.6 L445.3 192.6 L445.3 191.6 L445.3 190.6 L445.3 189.6 L445.3 188.6 L445.3 187.6 L445.3 186.6 L445.4 185.6 L445.4 184.6 L445.4 183.6 L445.4 182.6 L445.4 181.6 L445.4 180.6 L445.5 179.6 L445.5 178.6 L445.5 177.6 L445.5 176.6 L445.5 175.6 L445.5 174.6 L445.6 173.6 L445.6 172.6 L445.6 171.6 L445.6 170.6 L445.6 169.6 L445.7 168.6 L445.7 167.6 L445.7 166.6 L445.7 165.6 L445.8 164.6 L445.8 163.6 L445.8 162.6 L445.9 161.6 L445.9 160.6 L445.9 159.6 L445.9 158.6 L446.0 157.6 L446.0 156.6 L446.1 155.6 L446.1 154.6 L446.1 153.6 L446.2 152.6 L446.2 151.6 L446.3 150.6 L446.3 149.6 L446.4 148.6 L446.5 147.6 L446.5 146.6 L446.6 145.6 L446.6 144.6 L446.7 143.6 L446.7 142.6 L446.8 141.6 L446.9 140.6 L446.9 139.6 L447.0 138.6 L447.1 137.6 L447.1 136.6 L447.2 135.6 L447.3 134.6 L447.3 133.6 L447.4 132.6 L447.5 131.6 L447.5 130.6 L447.6 129.6 L447.7 128.6 L447.7 127.6 L447.8 126.6 L447.8 125.6 L447.9 124.6 L448.0 123.6 L448.0 122.6 L448.1 121.6 L448.2 120.6 L448.3 119.6 L448.3 118.7 L448.4 117.7 L448.5 116.7 L448.6 115.7 L448.7 114.7 L448.7 113.7 L448.8 112.7 L448.9 111.7 L449.0 110.7 L449.1 109.7 L449.2 108.7 L449.3 107.7 L449.4 106.7 L449.4 105.7 L449.5 104.7 L449.6 103.7 L449.7 102.7 L449.9 101.7 L450.0 100.7 L450.2 99.8 L450.4 98.8 L450.6 97.8 L450.8 96.8 L451.1 95.9 L451.5 94.9 L451.9 94.0 L452.5 93.2 L453.2 92.5 L454.0 91.9 L454.9 91.5 L455.9 91.6 L456.8 92.0 L457.8 92.5 L458.8 92.8 L459.7 92.9 L460.7 92.7 L461.6 92.3 L462.5 91.9 L463.3 91.3 L464.1 90.6 L464.8 89.8 L465.4 89.0 L465.9 88.1 L466.5 87.3 L466.9 86.4 L467.4 85.6 L467.9 84.7 L468.3 83.8 L468.8 82.9 L469.2 82.1 L469.7 81.2 L470.1 80.3 L470.6 79.4 L471.0 78.5 L471.4 77.6 L471.9 76.7 L472.3 75.8 L472.8 74.9 L473.2 74.0 L473.7 73.1 L474.2 72.3 L474.7 71.4 L475.2 70.6 L475.8 69.9 L476.6 69.1 L477.5 68.4 L478.4 67.8 L479.3 67.5 L480.2 67.3 L481.1 67.3 L482.1 67.5 L483.0 67.9 L483.9 68.5 L484.7 69.3 L485.3 70.1 L485.9 70.9 L486.3 71.7 L486.8 72.6 L487.4 73.4 L487.9 74.3 L488.3 75.2 L488.6 76.2 L488.7 77.1 L488.7 78.1 L488.8 79.1 L488.8 80.1 L488.9 81.1 L488.9 82.1 L488.9 83.1 L488.9 84.1 L488.9 85.1 L489.0 86.1 L489.0 87.1 L489.0 88.1 L489.0 89.1 L489.0 90.1 L489.0 91.1 L489.0 92.1 L489.0 93.1 L489.1 94.1 L489.1 95.1 L489.1 96.1 L489.1 97.1 L489.1 98.1 L489.1 99.1 L489.1 100.1 L489.2 101.1 L489.2 102.1 L489.2 103.1 L489.2 104.1 L489.2 105.1 L489.2 106.1 L489.2 107.1 L489.3 108.1 L489.3 109.1 L489.3 110.1 L489.3 111.1 L489.3 112.1 L489.3 113.1 L489.4 114.1 L489.4 115.1 L489.4 116.1 L489.4 117.1 L489.4 118.1 L489.5 119.1 L489.5 120.1 L489.5 121.1 L489.5 122.1 L489.6 123.1 L489.6 124.1 L489.6 125.1 L489.6 126.1 L489.6 127.1 L489.7 128.1 L489.7 129.1 L489.7 130.1 L489.7 131.1 L489.8 132.1 L489.8 133.1 L489.8 134.1 L489.8 135.1 L489.9 136.1 L489.9 137.1 L489.9 138.1 L489.9 139.1 L490.0 140.1 L490.0 141.1 L490.0 142.1 L490.0 143.1 L490.1 144.1 L490.1 145.1 L490.1 146.1 L490.1 147.1 L490.2 148.1 L490.2 149.1 L490.2 150.1 L490.3 151.1 L490.3 152.1 L490.3 153.1 L490.3 154.1 L490.4 155.1 L490.4 156.1 L490.4 157.1 L490.4 158.1 L490.5 159.1 L490.5 160.1 L490.5 161.1 L490.6 162.1 L490.6 163.1 L490.6 164.1 L490.6 165.1 L490.6 166.1 L490.7 167.1 L490.7 168.1 L490.7 169.1 L490.7 170.1 L490.7 171.1 L490.7 172.1 L490.7 173.1 L490.8 174.1 L490.8 175.1 L490.8 176.1 L490.8 177.1 L490.8 178.1 L490.8 179.1 L490.9 180.1 L490.9 181.1 L490.9 182.1 L490.9 183.1 L490.9 184.1 L491.0 185.1 L491.0 186.1 L491.0 187.1 L491.0 188.1 L491.1 189.1 L491.1 190.1 L491.1 191.1 L491.2 192.1 L491.2 193.1 L491.3 194.1 L491.3 195.1 L491.3 196.1 L491.4 197.1 L491.4 198.1 L491.5 199.1 L491.5 200.1 L491.6 201.1 L491.6 202.1 L491.7 203.1 L491.7 204.1 L491.8 205.1 L491.8 206.1 L491.9 207.1 L491.9 208.1 L492.0 209.1 L492.0 210.1 L492.1 211.1 L492.1 212.1 L492.2 213.1 L492.2 214.1 L492.3 215.1 L492.3 216.1 L492.4 217.1 L492.4 218.1 L492.5 219.1 L492.5 220.1 L492.6 221.1 L492.7 222.1 L492.7 223.1 L492.8 224.1 L492.8 225.1 L492.9 226.1 L492.9 227.1 L493.0 228.1 L493.1 229.1 L493.1 230.1 L493.2 231.1 L493.3 232.1 L493.3 233.1 L493.4 234.1 L493.5 235.1 L493.6 236.0 L493.6 237.0 L493.7 238.0 L493.8 239.0 L493.9 240.0 L493.9 241.0 L494.0 242.0 L494.1 243.0 L494.2 244.0 L494.3 245.0 L494.4 246.0 L494.5 247.0 L494.6 248.0 L494.8 249.0 L494.9 250.0 L495.0 251.0 L495.2 252.0 L495.3 253.0 L495.4 253.9 L495.6 254.9 L495.8 255.9 L496.0 256.9 L496.2 257.9 L496.5 258.8 L496.7 259.8 L497.0 260.8 L497.3 261.7 L497.7 262.7 L498.1 263.6 L498.8 264.4 L499.6 264.9 L500.5 265.0 L501.5 264.8 L502.4 264.5 L503.4 264.0 L504.3 263.6 L505.2 263.2 L506.1 263.0 L507.1 263.1 L508.0 263.5 L508.8 264.2 L509.6 264.9 L510.2 265.6 L510.8 266.4 L511.4 267.2 L511.9 268.1 L512.4 269.0 L512.9 269.8 L513.4 270.7 L513.9 271.6 L514.3 272.4 L514.8 273.3 L515.3 274.2 L515.7 275.1 L516.1 276.0 L516.6 276.9 L517.0 277.8 L517.4 278.7 L517.9 279.6 L518.3 280.5 L518.8 281.4 L519.3 282.3 L519.8 283.1 L520.3 283.9 L520.9 284.8 L521.5 285.6 L522.1 286.4 L522.7 287.2 L523.4 287.9 L524.1 288.6 L524.9 289.2 L525.8 289.8 L526.7 290.1 L527.6 290.1 L528.5 289.9 L529.2 289.4 L529.7 288.9" stroke="#b20000"/>
<path d="M75.2 128.4 L75.5 129.4 L75.8 130.3 L76.1 131.3 L76.3 132.2 L76.6 133.2 L76.8 134.2 L77.0 135.2 L77.1 136.2 L77.3 137.1 L77.5 138.1 L77.7 139.1 L77.8 140.1 L78.0 141.1 L78.1 142.1 L78.3 143.1 L78.4 144.1 L78.6 145.0 L78.7 146.0 L78.9 147.0 L79.1 148.0 L79.2 149.0 L79.4 150.0 L79.5 151.0 L79.7 152.0 L79.8 152.9 L79.9 153.9 L80.1 154.9 L80.2 155.9 L80.4 156.9 L80.5 157.9 L80.7 158.9 L80.8 159.9 L81.0 160.9 L81.1 161.9 L81.2 162.8 L81.4 163.8 L81.5 164.8 L81.6 165.8 L81.8 166.8 L81.9 167.8 L82.0 168.8 L82.2 169.8 L82.3 170.8 L82.4 171.8 L82.5 172.8 L82.7 173.8 L82.8 174.7 L82.9 175.7 L83.0 176.7 L83.2 177.7 L83.3 178.7 L83.4 179.7 L83.5 180.7 L83.7 181.7 L83.8 182.7 L83.9 183.7 L84.1 184.7 L84.2 185.7 L84.3 186.6 L84.5 187.6 L84.6 188.6 L84.7 189.6 L84.9 190.6 L85.0 191.6 L85.2 192.6 L85.4 193.6 L85.5 194.6 L85.7 195.5 L85.8 196.5 L86.0 197.5 L86.2 198.5 L86.3 199.5 L86.5 200.5 L86.7 201.5 L86.9 202.4 L87.0 203.4 L87.2 204.4 L87.4 205.4 L87.6 206.4 L87.8 207.4 L88.0 208.3 L88.2 209.3 L88.4 210.3 L88.6 211.3 L88.8 212.2 L89.1 213.2 L89.4 214.2 L89.7 215.1 L90.0 216.1 L90.3 217.0 L90.6 218.0 L91.0 218.9 L91.3 219.8 L91.7 220.8 L92.1 221.7 L92.5 222.6 L92.9 223.6 L93.2 224.5 L93.6 225.4 L94.0 226.3 L94.3 227.3 L94.7 228.2 L95.0 229.1 L95.4 230.1 L95.7 231.0 L96.1 232.0 L96.4 232.9 L96.7 233.8 L97.1 234.8 L97.4 235.7 L97.8 236.7 L98.1 237.6 L98.5 238.5 L98.9 239.4 L99.3 240.4 L99.7 241.3 L100.1 242.2 L100.5 243.1 L100.9 244.0 L101.4 244.9 L101.8 245.8 L102.3 246.7 L102.7 247.6 L103.3 248.4 L103.8 249.2 L104.5 250.0 L105.2 250.7 L105.9 251.5 L106.8 252.1 L107.6 252.6 L108.5 253.0 L109.5 253.1 L110.4 253.1 L111.4 252.9 L112.4 252.4 L113.3 251.9 L114.1 251.3 L114.9 250.7 L115.5 250.0 L116.2 249.2 L116.7 248.3 L117.2 247.5 L117.7 246.6 L118.2 245.7 L118.6 244.8 L119.0 243.9 L119.3 243.0 L119.7 242.0 L120.0 241.1 L120.3 240.1 L120.6 239.2 L120.9 238.2 L121.2 237.3 L121.5 236.3 L121.8 235.3 L122.0 234.4 L122.2 233.4 L122.4 232.4 L122.6 231.4 L122.8 230.4 L123.0 229.5 L123.2 228.5 L123.4 227.5 L123.5 226.5 L123.7 225.5 L123.9 224.5 L124.1 223.6 L124.2 222.6 L124.4 221.6 L124.5 220.6 L124.7 219.6 L124.8 218.6 L124.9 217.6 L125.1 216.6 L125.2 215.6 L125.3 214.6 L125.4 213.6 L125.6 212.7 L125.7 211.7 L125.8 210.7 L125.9 209.7 L126.1 208.7 L126.2 207.7 L126.3 206.7 L126.4 205.7 L126.5 204.7 L126.6 203.7 L126.7 202.7 L126.8 201.7 L126.9 200.7 L127.0 199.7 L127.1 198.7 L127.2 197.7 L127.3 196.8 L127.4 195.8 L127.5 194.8 L127.6 193.8 L127.7 192.8 L127.8 191.8 L127.9 190.8 L128.0 189.8 L128.1 188.8 L128.3 187.8 L128.4 186.8 L128.5 185.8 L128.7 184.8 L128.8 183.8 L128.9 182.8 L129.0 181.9 L129.2 180.9 L129.3 179.9 L129.4 178.9 L129.6 177.9 L129.7 176.9 L129.8 175.9 L130.0 174.9 L130.1 173.9 L130.2 172.9 L130.3 171.9 L130.4 170.9 L130.6 170.0 L130.7 169.0 L130.8 168.0 L130.9 167.0 L131.0 166.0 L131.2 165.0 L131.3 164.0 L131.4 163.0 L131.5 162.0 L131.6 161.0 L131.8 160.0 L131.9 159.0 L132.0 158.0 L132.2 157.0 L132.3 156.1 L132.4 155.1 L132.6 154.1 L132.7 153.1 L132.9 152.1 L133.0 151.1 L133.2 150.1 L133.3 149.1 L133.5 148.2 L133.7 147.2 L133.8 146.2 L134.0 145.2 L134.1 144.2 L134.3 143.2 L134.5 142.2 L134.7 141.2 L134.8 140.3 L135.0 139.3 L135.2 138.3 L135.4 137.3 L135.6 136.3 L135.8 135.4 L136.0 134.4 L136.2 133.4 L136.5 132.4 L136.7 131.5 L137.0 130.5 L137.3 129.5 L137.6 128.6 L137.9 127.6 L138.2 126.7 L138.5 125.7 L138.8 124.8 L139.1 123.8 L139.5 122.9 L139.8 122.0 L140.2 121.0 L140.6 120.1 L140.9 119.2 L141.3 118.2 L141.7 117.3 L142.2 116.4 L142.6 115.5 L143.0 114.6 L143.5 113.7 L144.0 112.8 L144.4 112.0 L144.9 111.1 L145.4 110.2 L145.9 109.4 L146.5 108.5 L147.0 107.7 L147.6 106.8 L148.1 106.0 L148.7 105.2 L149.3 104.4 L149.9 103.6 L150.5 102.8 L151.1 102.0 L151.8 101.3 L152.4 100.6 L153.1 99.9 L153.9 99.2 L154.8 98.6 L155.7 98.1 L156.6 97.7 L157.6 97.6 L158.5 97.7 L159.4 98.0 L160.3 98.6 L161.1 99.3 L161.7 100.1 L162.3 101.0 L162.7 101.8 L163.1 102.7 L163.4 103.7 L163.8 104.6 L164.1 105.6 L164.4 106.5 L164.7 107.5 L165.0 108.4 L165.2 109.4 L165.5 110.4 L165.7 111.3 L165.9 112.3 L166.1 113.3 L166.3 114.3 L166.5 115.3 L166.6 116.2 L166.8 117.2 L167.0 118.2 L167.1 119.2 L167.3 120.2 L167.4 121.2 L167.6 122.2 L167.7 123.2 L167.8 124.1 L168.0 125.1 L168.1 126.1 L168.3 127.1 L168.4 128.1 L168.5 129.1 L168.7 130.1 L168.8 131.1 L168.9 132.1 L169.1 133.1 L169.2 134.1 L169.3 135.0 L169.5 136.0 L169.6 137.0 L169.7 138.0 L169.8 139.0 L170.0 140.0 L170.1 141.0 L170.2 142.0 L170.4 143.0 L170.5 144.0 L170.6 145.0 L170.7 146.0 L170.9 146.9 L171.0 147.9 L171.1 148.9 L171.2 149.9 L171.3 150.9 L171.5 151.9 L171.6 152.9 L171.7 153.9 L171.8 154.9 L171.9 155.9 L172.1 156.9 L172.2 157.9 L172.3 158.9 L172.4 159.9 L172.5 160.8 L172.7 161.8 L172.8 162.8 L172.9 163.8 L173.0 164.8 L173.2 165.8 L173.3 166.8 L173.4 167.8 L173.6 168.8 L173.7 169.8 L173.8 170.8 L173.9 171.8 L174.1 172.7 L174.2 173.7 L174.3 174.7 L174.5 175.7 L174.6 176.7 L174.7 177.7 L174.9 178.7 L175.0 179.7 L175.1 180.7 L175.2 181.7 L175.4 182.7 L175.5 183.7 L175.6 184.6 L175.8 185.6 L175.9 186.6 L176.0 187.6 L176.1 188.6 L176.3 189.6 L176.4 190.6 L176.5 191.6 L176.6 192.6 L176.7 193.6 L176.8 194.6 L176.9 195.6 L177.0 196.6 L177.1 197.6 L177.2 198.6 L177.3 199.5 L177.4 200.5 L177.5 201.5 L177.6 202.5 L177.8 203.5 L177.9 204.5 L178.0 205.5 L178.1 206.5 L178.2 207.5 L178.4 208.5 L178.5 209.5 L178.6 210.5 L178.7 211.5 L178.9 212.5 L179.0 213.4 L179.2 214.4 L179.3 215.4 L179.4 216.4 L179.6 217.4 L179.8 218.4 L179.9 219.4 L180.1 220.4 L180.3 221.3 L180.5 222.3 L180.7 223.3 L180.9 224.3 L181.1 225.3 L181.3 226.2 L181.5 227.2 L181.8 228.2 L182.0 229.2 L182.3 230.1 L182.5 231.1 L182.8 232.1 L183.0 233.0 L183.3 234.0 L183.6 234.9 L183.9 235.9 L184.2 236.9 L184.5 237.8 L184.8 238.8 L185.1 239.7 L185.4 240.7 L185.7 241.6 L186.0 242.6 L186.3 243.5 L186.7 244.4 L187.1 245.4 L187.4 246.3 L187.8 247.2 L188.2 248.1 L188.6 249.1 L189.1 250.0 L189.5 250.8 L190.0 251.7 L190.6 252.5 L191.2 253.2 L191.8 254.0 L192.6 254.8 L193.4 255.5 L194.3 256.2 L195.2 256.8 L196.1 257.3 L197.0 257.7 L197.9 257.8 L198.8 257.8 L199.6 257.5 L200.5 257.1 L201.4 256.5 L202.2 255.8 L203.0 255.0 L203.7 254.1 L204.2 253.3 L204.7 252.4 L205.2 251.6 L205.6 250.7 L206.0 249.8 L206.3 248.8 L206.7 247.9 L207.1 247.0 L207.4 246.1 L207.8 245.1 L208.1 244.2 L208.5 243.2 L208.8 242.3 L209.1 241.3 L209.4 240.4 L209.6 239.4 L209.9 238.4 L210.1 237.5 L210.4 236.5 L210.6 235.5 L210.9 234.6 L211.1 233.6 L211.3 232.6 L211.5 231.6 L211.7 230.7 L211.9 229.7 L212.1 228.7 L212.3 227.7 L212.5 226.7 L212.7 225.7 L212.8 224.8 L213.0 223.8 L213.2 222.8 L213.4 221.8 L213.5 220.8 L213.7 219.8 L213.9 218.9 L214.0 217.9 L214.2 216.9 L214.3 215.9 L214.5 214.9 L214.6 213.9 L214.8 212.9 L214.9 211.9 L215.1 210.9 L215.2 210.0 L215.4 209.0 L215.5 208.0 L215.7 207.0 L215.8 206.0 L215.9 205.0 L216.1 204.0 L216.2 203.0 L216.4 202.0 L216.5 201.0 L216.6 200.1 L216.8 199.1 L216.9 198.1 L217.1 197.1 L217.2 196.1 L217.3 195.1 L217.5 194.1 L217.6 193.1 L217.7 192.1 L217.9 191.1 L218.0 190.1 L218.1 189.2 L218.2 188.2 L218.3 187.2 L218.5 186.2 L218.6 185.2 L218.7 184.2 L218.8 183.2 L218.9 182.2 L219.0 181.2 L219.1 180.2 L219.2 179.2 L219.3 178.2 L219.4 177.2 L219.4 176.2 L219.5 175.2 L219.6 174.2 L219.7 173.2 L219.8 172.2 L219.9 171.2 L220.0 170.2 L220.1 169.3 L220.2 168.3 L220.2 167.3 L220.3 166.3 L220.4 165.3 L220.5 164.3 L220.6 163.3 L220.7 162.3 L220.8 161.3 L220.9 160.3 L221.0 159.3 L221.2 158.3 L221.3 157.3 L221.4 156.3 L221.5 155.3 L221.7 154.3 L221.8 153.3 L222.0 152.4 L222.1 151.4 L222.2 150.4 L222.4 149.4 L222.6 148.4 L222.7 147.4 L222.9 146.4 L223.1 145.4 L223.2 144.5 L223.4 143.5 L223.6 142.5 L223.9 141.5 L224.1 140.5 L224.3 139.6 L224.6 138.6 L224.9 137.6 L225.2 136.7 L225.5 135.7 L225.8 134.8 L226.1 133.8 L226.4 132.9 L226.8 131.9 L227.1 131.0 L227.5 130.1 L227.8 129.1 L228.2 128.2 L228.5 127.3 L228.9 126.3 L229.3 125.4 L229.6 124.5 L230.0 123.6 L230.4 122.6 L230.8 121.7 L231.2 120.8 L231.5 119.9 L231.9 118.9 L232.3 118.0 L232.7 117.1 L233.1 116.2 L233.5 115.2 L233.9 114.3 L234.3 113.4 L234.7 112.5 L235.1 111.6 L235.5 110.7 L235.9 109.8 L236.3 108.9 L236.8 108.0 L237.2 107.1 L237.7 106.2 L238.2 105.4 L238.8 104.6 L239.5 103.9 L240.3 103.2 L241.1 102.5 L242.0 102.1 L242.9 101.9 L243.8 102.1 L244.7 102.6 L245.5 103.2 L246.2 104.0 L246.8 104.8 L247.4 105.6 L248.0 106.4 L248.5 107.3 L249.0 108.1 L249.6 109.0 L250.1 109.8 L250.6 110.7 L251.1 111.6 L251.6 112.4 L252.1 113.3 L252.6 114.2 L253.1 115.0 L253.5 115.9 L254.0 116.8 L254.4 117.7 L254.8 118.6 L255.2 119.6 L255.5 120.5 L255.8 121.5 L256.1 122.4 L256.4 123.4 L256.7 124.3 L256.9 125.3 L257.1 126.3 L257.4 127.3 L257.6 128.2 L257.7 129.2 L257.9 130.2 L258.1 131.2 L258.2 132.2 L258.4 133.2 L258.5 134.2 L258.7 135.1 L258.9 136.1 L259.0 137.1 L259.2 138.1 L259.3 139.1 L259.5 140.1 L259.6 141.1 L259.8 142.1 L259.9 143.0 L260.1 144.0 L260.3 145.0 L260.4 146.0 L260.6 147.0 L260.8 148.0 L261.0 149.0 L261.1 149.9 L261.3 150.9 L261.5 151.9 L261.6 152.9 L261.8 153.9 L262.0 154.9 L262.2 155.9 L262.3 156.8 L262.5 157.8 L262.7 158.8 L262.8 159.8 L263.0 160.8 L263.1 161.8 L263.3 162.8 L263.4 163.8 L263.5 164.8 L263.7 165.7 L263.8 166.7 L263.9 167.7 L264.0 168.7 L264.1 169.7 L264.2 170.7 L264.3 171.7 L264.4 172.7 L264.6 173.7 L264.7 174.7 L264.8 175.7 L264.9 176.7 L265.0 177.7 L265.1 178.7 L265.2 179.7 L265.3 180.7 L265.4 181.7 L265.5 182.6 L265.6 183.6 L265.8 184.6 L265.9 185.6 L266.0 186.6 L266.2 187.6 L266.3 188.6 L266.4 189.6 L266.6 190.6 L266.7 191.6 L266.9 192.5 L267.1 193.5 L267.2 194.5 L267.4 195.5 L267.5 196.5 L267.7 197.5 L267.9 198.5 L268.0 199.5 L268.2 200.4 L268.4 201.4 L268.5 202.4 L268.7 203.4 L268.9 204.4 L269.0 205.4 L269.2 206.4 L269.3 207.4 L269.4 208.4 L269.6 209.3 L269.7 210.3 L269.9 211.3 L270.1 212.3 L270.3 213.3 L270.6 214.2 L270.9 215.2 L271.2 216.2 L271.5 217.1 L271.9 218.0 L272.2 219.0 L272.6 219.9 L272.9 220.8 L273.3 221.8 L273.6 222.7 L274.0 223.7 L274.3 224.6 L274.7 225.5 L275.0 226.5 L275.4 227.4 L275.7 228.3 L276.0 229.3 L276.4 230.2 L276.7 231.2 L277.1 232.1 L277.4 233.0 L277.7 234.0 L278.1 234.9 L278.4 235.9 L278.8 236.8 L279.1 237.8 L279.4 238.7 L279.8 239.6 L280.1 240.6 L280.4 241.5 L280.8 242.5 L281.1 243.4 L281.4 244.3 L281.8 245.3 L282.2 246.2 L282.7 247.1 L283.1 248.0 L283.6 248.8 L284.1 249.7 L284.6 250.6 L285.1 251.5 L285.6 252.3 L286.2 253.1 L286.9 253.8 L287.7 254.6 L288.5 255.2 L289.4 255.5 L290.3 255.5 L291.2 255.2 L292.1 254.7 L292.9 254.1 L293.7 253.4 L294.5 252.7 L295.2 252.0 L295.9 251.3 L296.6 250.6 L297.2 249.8 L297.8 249.1 L298.4 248.3 L299.0 247.4 L299.6 246.6 L300.1 245.7 L300.5 244.8 L300.9 243.9 L301.3 243.0 L301.7 242.0 L302.0 241.1 L302.3 240.2 L302.6 239.2 L302.8 238.2 L303.0 237.3 L303.3 236.3 L303.5 235.3 L303.7 234.3 L303.9 233.3 L304.1 232.4 L304.3 231.4 L304.4 230.4 L304.6 229.4 L304.8 228.4 L305.0 227.4 L305.2 226.5 L305.3 225.5 L305.5 224.5 L305.6 223.5 L305.8 222.5 L305.9 221.5 L306.1 220.5 L306.2 219.5 L306.4 218.5 L306.5 217.6 L306.6 216.6 L306.8 215.6 L306.9 214.6 L307.0 213.6 L307.2 212.6 L307.3 211.6 L307.4 210.6 L307.5 209.6 L307.7 208.6 L307.8 207.6 L307.9 206.6 L308.0 205.7 L308.1 204.7 L308.2 203.7 L308.3 202.7 L308.4 201.7 L308.5 200.7 L308.6 199.7 L308.7 198.7 L308.8 197.7 L308.9 196.7 L309.0 195.7 L309.1 194.7 L309.2 193.7 L309.3 192.7 L309.4 191.7 L309.5 190.7 L309.6 189.7 L309.7 188.7 L309.8 187.7 L309.9 186.8 L310.0 185.8 L310.2 184.8 L310.3 183.8 L310.4 182.8 L310.5 181.8 L310.6 180.8 L310.7 179.8 L310.8 178.8 L310.9 177.8 L311.0 176.8 L311.1 175.8 L311.2 174.8 L311.3 173.8 L311.4 172.8 L311.5 171.8 L311.6 170.8 L311.8 169.9 L311.9 168.9 L312.0 167.9 L312.1 166.9 L312.2 165.9 L312.3 164.9 L312.5 163.9 L312.6 162.9 L312.7 161.9 L312.8 160.9 L313.0 159.9 L313.1 158.9 L313.3 157.9 L313.4 157.0 L313.6 156.0 L313.7 155.0 L313.9 154.0 L314.1 153.0 L314.3 152.0 L314.5 151.0 L314.6 150.1 L314.8 149.1 L315.0 148.1 L315.2 147.1 L315.4 146.1 L315.5 145.1 L315.7 144.2 L315.9 143.2 L316.1 142.2 L316.3 141.2 L316.5 140.2 L316.7 139.2 L316.8 138.3 L317.0 137.3 L317.3 136.3 L317.5 135.3 L317.7 134.4 L318.0 133.4 L318.2 132.4 L318.5 131.5 L318.8 130.5 L319.0 129.5 L319.3 128.6 L319.6 127.6 L319.9 126.7 L320.2 125.7 L320.6 124.8 L320.9 123.8 L321.2 122.9 L321.5 121.9 L321.9 121.0 L322.2 120.1 L322.6 119.1 L323.0 118.2 L323.4 117.3 L323.7 116.4 L324.1 115.4 L324.5 114.5 L325.0 113.6 L325.4 112.7 L325.8 111.8 L326.2 110.9 L326.7 110.0 L327.1 109.1 L327.6 108.2 L328.0 107.3 L328.5 106.4 L329.0 105.6 L329.5 104.7 L330.0 103.8 L330.5 103.0 L331.1 102.1 L331.6 101.3 L332.3 100.6 L333.0 99.9 L333.8 99.3 L334.7 98.7 L335.6 98.4 L336.6 98.2 L337.6 98.3 L338.5 98.6 L339.4 99.0 L340.3 99.6 L341.1 100.3 L341.7 101.0 L342.3 101.8 L342.9 102.6 L343.4 103.5 L343.9 104.4 L344.3 105.3 L344.7 106.2 L345.1 107.1 L345.4 108.0 L345.7 109.0 L346.0 110.0 L346.3 110.9 L346.5 111.9 L346.8 112.9 L347.0 113.8 L347.3 114.8 L347.5 115.8 L347.7 116.8 L347.9 117.7 L348.0 118.7 L348.2 119.7 L348.4 120.7 L348.5 121.7 L348.7 122.7 L348.8 123.7 L349.0 124.6 L349.2 125.6 L349.3 126.6 L349.5 127.6 L349.6 128.6 L349.8 129.6 L349.9 130.6 L350.1 131.6 L350.2 132.6 L350.4 133.5 L350.5 134.5 L350.6 135.5 L350.8 136.5 L350.9 137.5 L351.1 138.5 L351.2 139.5 L351.4 140.5 L351.5 141.5 L351.7 142.4 L351.8 143.4 L352.0 144.4 L352.1 145.4 L352.2 146.4 L352.4 147.4 L352.5 148.4 L352.7 149.4 L352.8 150.4 L353.0 151.4 L353.1 152.3 L353.2 153.3 L353.4 154.3 L353.5 155.3 L353.7 156.3 L353.8 157.3 L353.9 158.3 L354.0 159.3 L354.2 160.3 L354.3 161.3 L354.4 162.3 L354.5 163.2 L354.6 164.2 L354.8 165.2 L354.9 166.2 L355.0 167.2 L355.1 168.2 L355.2 169.2 L355.3 170.2 L355.4 171.2 L355.5 172.2 L355.6 173.2 L355.8 174.2 L355.9 175.2 L356.0 176.2 L356.1 177.2 L356.2 178.2 L356.3 179.2 L356.4 180.1 L356.5 181.1 L356.6 182.1 L356.7 183.1 L356.8 184.1 L356.9 185.1 L357.0 186.1 L357.1 187.1 L357.2 188.1 L357.3 189.1 L357.4 190.1 L357.5 191.1 L357.6 192.1 L357.7 193.1 L357.8 194.1 L357.9 195.1 L358.0 196.1 L358.1 197.1 L358.2 198.1 L358.3 199.1 L358.4 200.0 L358.5 201.0 L358.6 202.0 L358.7 203.0 L358.8 204.0 L358.9 205.0 L359.1 206.0 L359.2 207.0 L359.4 208.0 L359.5 209.0 L359.7 210.0 L359.9 210.9 L360.1 211.9 L360.3 212.9 L360.5 213.9 L360.7 214.9 L360.9 215.9 L361.1 216.8 L361.3 217.8 L361.5 218.8 L361.7 219.8 L361.9 220.7 L362.1 221.7 L362.3 222.7 L362.6 223.7 L362.8 224.6 L363.1 225.6 L363.3 226.6 L363.5 227.5 L363.8 228.5 L364.1 229.5 L364.3 230.4 L364.6 231.4 L364.9 232.4 L365.2 233.3 L365.5 234.3 L365.8 235.2 L366.1 236.2 L366.4 237.1 L366.8 238.1 L367.1 239.0 L367.4 240.0 L367.8 240.9 L368.2 241.8 L368.6 242.7 L369.0 243.6 L369.4 244.5 L369.8 245.4 L370.3 246.3 L370.7 247.2 L371.2 248.1 L371.7 249.0 L372.2 249.8 L372.7 250.7 L373.2 251.4 L373.9 252.2 L374.6 253.0 L375.3 253.7 L376.2 254.4 L377.1 255.1 L378.0 255.5 L378.9 255.9 L379.8 256.1 L380.7 256.1 L381.6 255.9 L382.6 255.6 L383.5 255.1 L384.3 254.4 L385.1 253.6 L385.8 252.8 L386.4 252.0 L386.9 251.2 L387.4 250.3 L387.8 249.5 L388.2 248.5 L388.6 247.6 L389.0 246.7 L389.4 245.8 L389.8 244.9 L390.2 244.0 L390.6 243.0 L390.9 242.1 L391.2 241.1 L391.5 240.2 L391.8 239.2 L392.0 238.2 L392.3 237.3 L392.6 236.3 L392.8 235.4 L393.1 234.4 L393.3 233.4 L393.5 232.4 L393.7 231.5 L393.9 230.5 L394.1 229.5 L394.3 228.5 L394.5 227.5 L394.6 226.5 L394.8 225.6 L395.0 224.6 L395.1 223.6 L395.3 222.6 L395.5 221.6 L395.7 220.6 L395.8 219.6 L396.0 218.7 L396.1 217.7 L396.3 216.7 L396.5 215.7 L396.6 214.7 L396.8 213.7 L396.9 212.7 L397.1 211.7 L397.2 210.8 L397.4 209.8 L397.6 208.8 L397.7 207.8 L397.9 206.8 L398.0 205.8 L398.2 204.8 L398.3 203.8 L398.5 202.8 L398.6 201.9 L398.7 200.9 L398.9 199.9 L399.0 198.9 L399.1 197.9 L399.3 196.9 L399.4 195.9 L399.5 194.9 L399.6 193.9 L399.7 192.9 L399.9 191.9 L400.0 190.9 L400.1 190.0 L400.2 189.0 L400.3 188.0 L400.4 187.0 L400.5 186.0 L400.6 185.0 L400.7 184.0 L400.8 183.0 L400.9 182.0 L401.0 181.0 L401.1 180.0 L401.2 179.0 L401.3 178.0 L401.3 177.0 L401.4 176.0 L401.5 175.0 L401.6 174.0 L401.7 173.0 L401.8 172.0 L401.8 171.0 L401.9 170.0 L402.0 169.0 L402.1 168.0 L402.2 167.0 L402.3 166.1 L402.4 165.1 L402.5 164.1 L402.6 163.1 L402.7 162.1 L402.8 161.1 L403.0 160.1 L403.1 159.1 L403.2 158.1 L403.4 157.1 L403.5 156.1 L403.7 155.1 L403.9 154.2 L404.0 153.2 L404.2 152.2 L404.4 151.2 L404.6 150.2 L404.8 149.2 L405.0 148.3 L405.2 147.3 L405.4 146.3 L405.6 145.3 L405.8 144.3 L406.0 143.4 L406.2 142.4 L406.5 141.4 L406.7 140.4 L406.9 139.5 L407.2 138.5 L407.4 137.5 L407.7 136.6 L408.0 135.6 L408.3 134.7 L408.6 133.7 L408.9 132.7 L409.2 131.8 L409.5 130.8 L409.8 129.9 L410.1 128.9 L410.4 128.0 L410.7 127.0 L411.1 126.1 L411.4 125.2 L411.7 124.2 L412.1 123.3 L412.4 122.3 L412.8 121.4 L413.1 120.5 L413.5 119.5 L413.9 118.6 L414.2 117.7 L414.6 116.8 L415.1 115.9 L415.5 115.0 L415.9 114.0 L416.3 113.1 L416.8 112.2 L417.3 111.4 L417.8 110.5 L418.3 109.7 L418.9 108.8 L419.4 108.0 L420.0 107.2 L420.7 106.4 L421.4 105.7 L422.1 105.1 L423.0 104.5 L423.9 104.0 L424.8 103.7 L425.8 103.7 L426.7 103.9 L427.7 104.2 L428.6 104.7 L429.4 105.3 L430.2 106.0 L430.9 106.7 L431.6 107.4 L432.2 108.2 L432.8 109.0 L433.4 109.8 L434.0 110.6 L434.5 111.4 L435.1 112.3 L435.6 113.1 L436.1 114.0 L436.5 114.9 L437.0 115.8 L437.4 116.7 L437.7 117.6 L438.1 118.6 L438.4 119.5 L438.6 120.5 L438.9 121.5 L439.1 122.4 L439.4 123.4 L439.6 124.4 L439.8 125.4 L440.0 126.4 L440.2 127.3 L440.4 128.3 L440.6 129.3 L440.7 130.3 L440.9 131.3 L441.0 132.3 L441.2 133.2 L441.4 134.2 L441.5 135.2 L441.7 136.2 L441.8 137.2 L442.0 138.2 L442.1 139.2 L442.3 140.2 L442.4 141.2 L442.5 142.1 L442.7 143.1 L442.8 144.1 L442.9 145.1 L443.1 146.1 L443.2 147.1 L443.3 148.1 L443.5 149.1 L443.6 150.1 L443.7 151.1 L443.8 152.1 L444.0 153.1 L444.1 154.0 L444.2 155.0 L444.3 156.0 L444.5 157.0 L444.6 158.0 L444.7 159.0 L444.8 160.0 L445.0 161.0 L445.1 162.0 L445.2 163.0 L445.3 164.0 L445.4 165.0 L445.5 166.0 L445.7 166.9 L445.8 167.9 L445.9 168.9 L446.0 169.9 L446.1 170.9 L446.2 171.9 L446.3 172.9 L446.4 173.9 L446.6 174.9 L446.7 175.9 L446.8 176.9 L446.9 177.9 L447.0 178.9 L447.1 179.9 L447.2 180.9 L447.3 181.9 L447.5 182.8 L447.6 183.8 L447.7 184.8 L447.8 185.8 L447.9 186.8 L448.0 187.8 L448.2 188.8 L448.3 189.8 L448.4 190.8 L448.5 191.8 L448.7 192.8 L448.8 193.8 L449.0 194.8 L449.1 195.7 L449.3 196.7 L449.5 197.7 L449.6 198.7 L449.8 199.7 L450.0 200.7 L450.2 201.6 L450.4 202.6 L450.5 203.6 L450.7 204.6 L450.9 205.6 L451.1 206.6 L451.3 207.5 L451.5 208.5 L451.7 209.5 L452.0 210.5 L452.2 211.5 L452.4 212.4 L452.7 213.4 L453.0 214.4 L453.3 215.3 L453.6 216.3 L453.9 217.2 L454.2 218.2 L454.5 219.1 L454.8 220.1 L455.1 221.0 L455.4 222.0 L455.8 222.9 L456.1 223.9 L456.4 224.8 L456.7 225.7 L457.0 226.7 L457.4 227.6 L457.7 228.6 L458.0 229.5 L458.3 230.5 L458.6 231.4 L458.9 232.4 L459.3 233.3 L459.6 234.3 L459.9 235.2 L460.2 236.2 L460.5 237.1 L460.9 238.1 L461.2 239.0 L461.5 240.0 L461.9 240.9 L462.2 241.8 L462.6 242.8 L462.9 243.7 L463.3 244.6 L463.6 245.6 L464.0 246.5 L464.3 247.4 L464.7 248.4 L465.1 249.3 L465.5 250.2 L466.0 251.1 L466.4 251.9 L466.9 252.8 L467.5 253.7 L468.2 254.5 L468.9 255.3 L469.7 255.9 L470.6 256.3 L471.5 256.4 L472.4 256.3 L473.4 255.9 L474.3 255.4 L475.1 254.7 L475.8 254.0 L476.5 253.3 L477.2 252.6 L477.9 251.8 L478.5 251.1 L479.1 250.3 L479.7 249.4 L480.2 248.6 L480.7 247.8 L481.2 246.9 L481.7 246.0 L482.1 245.1 L482.5 244.2 L482.9 243.2 L483.2 242.3 L483.5 241.3 L483.8 240.4 L484.1 239.4 L484.4 238.5 L484.6 237.5 L484.9 236.5 L485.1 235.5 L485.3 234.6 L485.6 233.6 L485.8 232.6 L486.0 231.6 L486.2 230.7 L486.4 229.7 L486.5 228.7 L486.7 227.7 L486.8 226.7 L487.0 225.7 L487.1 224.7 L487.3 223.8 L487.4 222.8 L487.6 221.8 L487.7 220.8 L487.9 219.8 L488.0 218.8 L488.1 217.8 L488.2 216.8 L488.4 215.8 L488.5 214.8 L488.6 213.8 L488.7 212.8 L488.8 211.9 L488.9 210.9 L489.0 209.9 L489.1 208.9 L489.2 207.9 L489.3 206.9 L489.3 205.9 L489.4 204.9 L489.5 203.9 L489.6 202.9 L489.6 201.9 L489.7 200.9 L489.8 199.9 L489.9 198.9 L489.9 197.9 L490.0 196.9 L490.1 195.9 L490.2 194.9 L490.2 193.9 L490.3 192.9 L490.4 191.9 L490.5 190.9 L490.6 189.9 L490.7 188.9 L490.8 187.9 L490.9 186.9 L491.0 185.9 L491.1 185.0 L491.2 184.0 L491.3 183.0 L491.4 182.0 L491.5 181.0 L491.6 180.0 L491.7 179.0 L491.9 178.0 L492.0 177.0 L492.1 176.0 L492.2 175.0 L492.3 174.0 L492.4 173.0 L492.5 172.0 L492.7 171.0 L492.8 170.0 L492.9 169.1 L493.0 168.1 L493.1 167.1 L493.3 166.1 L493.4 165.1 L493.5 164.1 L493.6 163.1 L493.8 162.1 L493.9 161.1 L494.0 160.1 L494.2 159.1 L494.3 158.1 L494.5 157.2 L494.6 156.2 L494.8 155.2 L494.9 154.2 L495.1 153.2 L495.3 152.2 L495.4 151.2 L495.6 150.2 L495.8 149.3 L496.0 148.3 L496.1 147.3 L496.3 146.3 L496.5 145.3 L496.7 144.3 L496.9 143.4 L497.1 142.4 L497.3 141.4 L497.5 140.4 L497.7 139.5 L498.0 138.5 L498.2 137.5 L498.4 136.5 L498.7 135.6 L498.9 134.6 L499.2 133.6 L499.5 132.7 L499.7 131.7 L500.0 130.8 L500.3 129.8 L500.6 128.8 L501.0 127.9 L501.3 127.0 L501.6 126.0 L501.9 125.1 L502.3 124.1 L502.6 123.2 L503.0 122.2 L503.3 121.3 L503.6 120.4 L504.0 119.4 L504.3 118.5 L504.7 117.5 L505.0 116.6 L505.4 115.7 L505.8 114.8 L506.1 113.8 L506.5 112.9 L506.9 112.0 L507.3 111.0 L507.7 110.1 L508.0 109.2 L508.4 108.3 L508.8 107.4 L509.2 106.4 L509.7 105.5 L510.1 104.7 L510.6 103.8 L511.0 102.9 L511.5 102.0 L512.0 101.1 L512.6 100.3 L513.2 99.6 L514.0 98.9 L514.8 98.3 L515.7 97.8 L516.7 97.6 L517.6 97.7 L518.5 98.0 L519.4 98.5 L520.2 99.2 L521.0 100.0 L521.6 100.7 L522.2 101.5 L522.7 102.3 L523.2 103.2 L523.7 104.0 L524.2 104.9 L524.7 105.8 L525.2 106.7 L525.6 107.6 L526.0 108.5 L526.4 109.4 L526.8 110.3 L527.2 111.3 L527.5 112.2 L527.9 113.1 L528.2 114.1 L528.5 115.0 L528.8 116.0 L529.0 116.9 L529.3 117.9" stroke="#bb8c00"/>
<path d="M75.2 128.4 L75.5 129.4 L75.8 130.3 L76.1 131.3 L76.3 132.2 L76.6 133.2 L76.8 134.2 L77.0 135.2 L77.1 136.2 L77.3 137.1 L77.5 138.1 L77.7 139.1 L77.8 140.1 L78.0 141.1 L78.1 142.1 L78.3 143.1 L78.4 144.1 L78.6 145.0 L78.7 146.0 L78.9 147.0 L79.1 148.0 L79.2 149.0 L79.4 150.0 L79.5 151.0 L79.7 152.0 L79.8 152.9 L79.9 153.9 L80.1 154.9 L80.2 155.9 L80.4 156.9 L80.5 157.9 L80.7 158.9 L80.8 159.9 L81.0 160.9 L81.1 161.9 L81.2 162.8 L81.4 163.8 L81.5 164.8 L81.6 165.8 L81.8 166.8 L81.9 167.8 L82.0 168.8 L82.2 169.8 L82.3 170.8 L82.4 171.8 L82.5 172.8 L82.7 173.8 L82.8 174.7 L82.9 175.7 L83.0 176.7 L83.2 177.7 L83.3 178.7 L83.4 179.7 L83.5 180.7 L83.7 181.7 L83.8 182.7 L83.9 183.7 L84.1 184.7 L84.2 185.7 L84.3 186.6 L84.5 187.6 L84.6 188.6 L84.7 189.6 L84.9 190.6 L85.0 191.6 L85.2 192.6 L85.4 193.6 L85.5 194.6 L85.7 195.5 L85.8 196.5 L86.0 197.5 L86.2 198.5 L86.3 199.5 L86.5 200.5 L86.7 201.5 L86.9 202.4 L87.0 203.4 L87.2 204.4 L87.4 205.4 L87.6 206.4 L87.8 207.4 L88.0 208.3 L88.2 209.3 L88.4 210.3 L88.6 211.3 L88.8 212.2 L89.1 213.2 L89.4 214.2 L89.7 215.1 L90.1 216.0 L90.5 217.0 L90.9 217.9 L91.5 218.7 L92.1 219.5 L92.8 220.2 L93.5 220.9 L94.2 221.7 L94.8 222.4 L95.4 223.3 L95.8 224.2 L96.3 225.0 L96.7 225.9 L97.2 226.8 L97.6 227.7 L98.0 228.6 L98.4 229.6 L98.9 230.5 L99.3 231.4 L99.7 232.3 L100.1 233.2 L100.5 234.1 L100.9 235.0 L101.3 235.9 L101.7 236.8 L102.2 237.8 L102.7 238.7 L103.3 239.5 L104.0 240.2 L104.7 240.7 L105.6 240.7 L106.5 240.3 L107.3 239.6 L108.0 238.8 L108.6 238.0 L109.1 237.1 L109.5 236.2 L110.1 235.4 L110.7 234.6 L111.5 234.0 L112.3 233.4 L113.2 232.9 L114.1 232.6 L115.1 232.4 L116.0 232.1 L116.9 231.7 L117.7 231.0 L118.3 230.2 L118.8 229.4 L119.2 228.5 L119.5 227.5 L119.9 226.6 L120.2 225.6 L120.5 224.6 L120.7 223.7 L121.0 222.7 L121.3 221.8 L121.5 220.8 L121.8 219.8 L122.0 218.9 L122.2 217.9 L122.4 216.9 L122.6 215.9 L122.8 214.9 L123.0 213.9 L123.1 213.0 L123.3 212.0 L123.5 211.0 L123.7 210.0 L123.8 209.0 L124.0 208.0 L124.1 207.0 L124.3 206.1 L124.4 205.1 L124.5 204.1 L124.6 203.1 L124.7 202.1 L124.8 201.1 L124.9 200.1 L125.0 199.1 L125.2 198.1 L125.3 197.1 L125.4 196.1 L125.5 195.1 L125.6 194.1 L125.7 193.1 L125.8 192.1 L126.0 191.2 L126.1 190.2 L126.2 189.2 L126.3 188.2 L126.5 187.2 L126.6 186.2 L126.7 185.2 L126.9 184.2 L127.0 183.2 L127.2 182.2 L127.3 181.2 L127.4 180.3 L127.6 179.3 L127.7 178.3 L127.8 177.3 L128.0 176.3 L128.1 175.3 L128.2 174.3 L128.4 173.3 L128.5 172.3 L128.6 171.3 L128.7 170.3 L128.9 169.3 L129.0 168.4 L129.1 167.4 L129.3 166.4 L129.4 165.4 L129.5 164.4 L129.6 163.4 L129.8 162.4 L129.9 161.4 L130.0 160.4 L130.1 159.4 L130.3 158.4 L130.4 157.4 L130.6 156.5 L130.7 155.5 L130.9 154.5 L131.0 153.5 L131.2 152.5 L131.4 151.5 L131.6 150.5 L131.7 149.6 L131.9 148.6 L132.1 147.6 L132.4 146.6 L132.6 145.7 L132.9 144.7 L133.1 143.7 L133.4 142.8 L133.7 141.8 L134.0 140.8 L134.3 139.9 L134.6 139.0 L135.0 138.0 L135.4 137.1 L135.9 136.2 L136.5 135.4 L137.2 134.8 L138.1 134.4 L139.1 134.3 L140.1 134.2 L141.1 134.1 L142.0 133.7 L142.9 133.2 L143.7 132.7 L144.5 132.1 L145.3 131.4 L146.0 130.7 L146.6 130.0 L147.4 129.3 L148.3 128.7 L149.1 128.3 L150.0 128.2 L150.9 128.4 L151.8 129.0 L152.6 129.6 L153.3 130.4 L153.9 131.1 L154.6 131.9 L155.4 132.6 L156.3 133.2 L157.1 133.3 L157.8 132.9 L158.5 132.2 L159.2 131.5 L159.9 130.7 L160.5 129.8 L161.1 129.0 L161.7 128.2 L162.4 127.5 L163.2 127.1 L164.1 127.2 L164.8 127.8 L165.4 128.6 L165.8 129.5 L166.2 130.4 L166.5 131.4 L166.8 132.4 L167.0 133.3 L167.3 134.3 L167.5 135.3 L167.7 136.2 L167.9 137.2 L168.1 138.2 L168.3 139.2 L168.5 140.2 L168.7 141.1 L168.9 142.1 L169.1 143.1 L169.3 144.1 L169.5 145.1 L169.7 146.1 L169.8 147.0 L170.0 148.0 L170.2 149.0 L170.4 150.0 L170.5 151.0 L170.7 152.0 L170.9 153.0 L171.0 153.9 L171.2 154.9 L171.3 155.9 L171.5 156.9 L171.6 157.9 L171.8 158.9 L171.9 159.9 L172.1 160.9 L172.2 161.9 L172.3 162.8 L172.5 163.8 L172.6 164.8 L172.7 165.8 L172.8 166.8 L173.0 167.8 L173.1 168.8 L173.2 169.8 L173.3 170.8 L173.5 171.8 L173.6 172.8 L173.7 173.8 L173.8 174.8 L173.9 175.7 L174.1 176.7 L174.2 177.7 L174.3 178.7 L174.4 179.7 L174.5 180.7 L174.7 181.7 L174.8 182.7 L174.9 183.7 L175.0 184.7 L175.2 185.7 L175.3 186.7 L175.4 187.7 L175.5 188.6 L175.7 189.6 L175.8 190.6 L175.9 191.6 L176.0 192.6 L176.2 193.6 L176.3 194.6 L176.5 195.6 L176.6 196.6 L176.7 197.6 L176.9 198.6 L177.0 199.5 L177.2 200.5 L177.3 201.5 L177.5 202.5 L177.6 203.5 L177.8 204.5 L178.0 205.5 L178.2 206.4 L178.5 207.4 L178.7 208.3 L179.0 209.3 L179.4 210.3 L179.8 211.2 L180.2 212.1 L180.8 212.9 L181.6 213.6 L182.4 214.2 L183.3 214.7 L184.2 215.0 L185.1 215.4 L186.0 215.8 L186.8 216.4 L187.5 217.1 L188.2 217.8 L188.8 218.6 L189.4 219.4 L190.0 220.2 L190.5 221.1 L191.0 222.0 L191.5 222.8 L191.9 223.7 L192.4 224.6 L193.0 225.5 L193.5 226.3 L194.1 227.1 L194.8 227.9 L195.4 228.6 L196.2 229.2 L197.0 229.6 L197.9 229.5 L198.9 229.0 L199.9 228.5 L200.8 228.5 L201.6 228.8 L202.4 229.4 L203.2 230.1 L203.9 230.8 L204.5 231.6 L205.2 232.3 L205.8 233.1 L206.5 233.8 L207.2 234.6 L208.0 235.4 L208.8 235.9 L209.4 235.8 L210.0 235.3 L210.5 234.4 L210.9 233.4 L211.2 232.4 L211.5 231.4 L211.8 230.4 L212.1 229.4 L212.3 228.5 L212.6 227.5 L212.8 226.5 L213.0 225.6 L213.1 224.6 L213.3 223.6 L213.4 222.6 L213.6 221.6 L213.7 220.6 L213.9 219.6 L214.0 218.6 L214.2 217.6 L214.3 216.7 L214.5 215.7 L214.6 214.7 L214.7 213.7 L214.9 212.7 L215.0 211.7 L215.2 210.7 L215.3 209.7 L215.4 208.7 L215.6 207.7 L215.7 206.8 L215.8 205.8 L216.0 204.8 L216.1 203.8 L216.3 202.8 L216.4 201.8 L216.5 200.8 L216.7 199.8 L216.8 198.8 L217.0 197.8 L217.2 196.9 L217.3 195.9 L217.5 194.9 L217.7 193.9 L217.8 192.9 L218.0 191.9 L218.1 190.9 L218.3 190.0 L218.5 189.0 L218.6 188.0 L218.8 187.0 L218.9 186.0 L219.1 185.0 L219.2 184.0 L219.4 183.0 L219.5 182.0 L219.6 181.1 L219.8 180.1 L219.9 179.1 L220.1 178.1 L220.2 177.1 L220.3 176.1 L220.5 175.1 L220.6 174.1 L220.7 173.1 L220.9 172.1 L221.0 171.2 L221.2 170.2 L221.3 169.2 L221.4 168.2 L221.6 167.2 L221.7 166.2 L221.9 165.2 L222.0 164.2 L222.2 163.2 L222.3 162.2 L222.5 161.3 L222.6 160.3 L222.8 159.3 L223.0 158.3 L223.2 157.3 L223.4 156.3 L223.7 155.4 L224.0 154.4 L224.3 153.5 L224.7 152.5 L225.1 151.6 L225.4 150.7 L225.9 149.8 L226.3 148.9 L226.7 148.0 L227.2 147.1 L227.6 146.2 L228.1 145.3 L228.6 144.4 L229.1 143.5 L229.6 142.7 L230.1 141.8 L230.6 141.0 L231.2 140.1 L231.6 139.3 L232.1 138.4 L232.5 137.4 L232.8 136.5 L233.2 135.6 L233.5 134.6 L233.8 133.7 L234.1 132.7 L234.4 131.8 L234.7 130.8 L235.0 129.9 L235.3 128.9 L235.6 127.9 L235.9 127.0 L236.2 126.1 L236.5 125.1 L236.7 124.2 L237.0 123.2 L237.3 122.3 L237.6 121.3 L237.9 120.4 L238.4 119.5 L238.9 118.5 L239.5 117.6 L240.2 116.7 L240.9 116.0 L241.7 115.8 L242.5 116.0 L243.2 116.6 L244.0 117.4 L244.7 118.1 L245.3 118.9 L245.9 119.7 L246.5 120.5 L247.2 121.3 L248.0 122.0 L248.9 122.4 L249.8 122.5 L250.6 122.2 L251.4 121.6 L252.3 121.1 L253.3 120.7 L254.2 120.7 L254.9 121.1 L255.6 121.9 L256.0 122.8 L256.4 123.8 L256.7 124.7 L256.9 125.7 L257.1 126.7 L257.3 127.7 L257.5 128.7 L257.7 129.6 L257.9 130.6 L258.1 131.6 L258.2 132.6 L258.4 133.6 L258.6 134.6 L258.7 135.5 L258.9 136.5 L259.0 137.5 L259.2 138.5 L259.4 139.5 L259.5 140.5 L259.7 141.5 L259.8 142.5 L260.0 143.4 L260.2 144.4 L260.3 145.4 L260.5 146.4 L260.7 147.4 L260.8 148.4 L261.0 149.4 L261.2 150.3 L261.4 151.3 L261.5 152.3 L261.7 153.3 L261.9 154.3 L262.1 155.3 L262.2 156.3 L262.4 157.2 L262.6 158.2 L262.7 159.2 L262.9 160.2 L263.0 161.2 L263.2 162.2 L263.3 163.2 L263.4 164.2 L263.5 165.2 L263.6 166.1 L263.7 167.1 L263.8 168.1 L263.9 169.1 L264.0 170.1 L264.1 171.1 L264.2 172.1 L264.2 173.1 L264.3 174.1 L264.4 175.1 L264.4 176.1 L264.5 177.1 L264.6 178.1 L264.7 179.1 L264.7 180.1 L264.8 181.1 L264.9 182.1 L265.0 183.1 L265.1 184.1 L265.2 185.1 L265.2 186.1 L265.4 187.1 L265.5 188.1 L265.6 189.1 L265.7 190.1 L265.8 191.1 L266.0 192.0 L266.1 193.0 L266.3 194.0 L266.5 195.0 L266.6 196.0 L266.8 197.0 L267.0 198.0 L267.1 199.0 L267.3 199.9 L267.5 200.9 L267.7 201.9 L267.9 202.9 L268.1 203.9 L268.3 204.8 L268.5 205.8 L268.7 206.8 L268.9 207.8 L269.2 208.7 L269.4 209.7 L269.7 210.7 L270.0 211.6 L270.3 212.6 L270.7 213.5 L271.1 214.4 L271.6 215.3 L272.1 216.2 L272.6 217.0 L273.2 217.8 L273.9 218.6 L274.6 219.3 L275.2 220.1 L275.8 220.9 L276.3 221.7 L276.7 222.7 L277.1 223.6 L277.4 224.5 L277.8 225.4 L278.1 226.4 L278.5 227.3 L278.9 228.3 L279.2 229.2 L279.6 230.1 L280.0 231.0 L280.4 231.9 L280.8 232.9 L281.2 233.8 L281.6 234.7 L282.0 235.6 L282.4 236.5 L282.9 237.4 L283.4 238.3 L284.0 239.2 L284.6 240.0 L285.3 240.5 L286.1 240.7 L286.9 240.3 L287.6 239.6 L288.3 238.7 L288.9 237.8 L289.3 236.8 L289.7 235.9 L290.0 235.0 L290.3 234.0 L290.6 233.1 L290.9 232.2 L291.3 231.2 L291.7 230.3 L292.2 229.3 L292.8 228.4 L293.4 227.5 L294.0 227.0 L294.7 226.9 L295.4 227.3 L296.1 228.1 L296.8 229.0 L297.6 229.7 L298.5 230.5 L299.3 231.0 L300.1 231.2 L300.9 230.9 L301.4 230.2 L301.9 229.3 L302.2 228.3 L302.4 227.3 L302.6 226.3 L302.8 225.3 L302.9 224.3 L303.1 223.3 L303.3 222.3 L303.5 221.3 L303.6 220.4 L303.8 219.4 L303.9 218.4 L304.1 217.4 L304.3 216.4 L304.4 215.4 L304.5 214.4 L304.7 213.4 L304.8 212.5 L305.0 211.5 L305.1 210.5 L305.3 209.5 L305.4 208.5 L305.6 207.5 L305.7 206.5 L305.9 205.5 L306.0 204.5 L306.2 203.6 L306.3 202.6 L306.5 201.6 L306.6 200.6 L306.8 199.6 L306.9 198.6 L307.1 197.6 L307.3 196.6 L307.4 195.7 L307.6 194.7 L307.7 193.7 L307.9 192.7 L308.0 191.7 L308.2 190.7 L308.3 189.7 L308.5 188.7 L308.6 187.7 L308.7 186.8 L308.9 185.8 L309.0 184.8 L309.1 183.8 L309.2 182.8 L309.3 181.8 L309.4 180.8 L309.5 179.8 L309.6 178.8 L309.7 177.8 L309.8 176.8 L309.8 175.8 L309.9 174.8 L310.0 173.8 L310.1 172.8 L310.2 171.8 L310.3 170.8 L310.3 169.8 L310.4 168.8 L310.5 167.8 L310.6 166.8 L310.7 165.8 L310.8 164.8 L310.9 163.8 L311.0 162.9 L311.1 161.9 L311.2 160.9 L311.3 159.9 L311.4 158.9 L311.5 157.9 L311.7 156.9 L311.8 155.9 L312.0 154.9 L312.2 153.9 L312.3 152.9 L312.5 152.0 L312.7 151.0 L312.9 150.0 L313.0 149.0 L313.3 148.0 L313.5 147.1 L313.8 146.1 L314.1 145.2 L314.4 144.2 L314.8 143.3 L315.3 142.4 L315.8 141.5 L316.4 140.8 L317.2 140.1 L318.1 139.7 L319.1 139.5 L320.1 139.5 L321.1 139.4 L321.9 139.0 L322.7 138.3 L323.3 137.6 L323.9 136.8 L324.5 136.0 L325.0 135.1 L325.4 134.2 L325.8 133.3 L326.2 132.4 L326.5 131.5 L326.9 130.5 L327.2 129.6 L327.7 128.7 L328.2 127.8 L328.8 126.8 L329.5 125.8 L330.2 125.0 L330.9 124.5 L331.6 124.6 L332.2 125.0 L332.9 125.7 L333.5 126.6 L334.0 127.5 L334.6 128.5 L335.1 129.4 L335.5 130.3 L335.9 131.2 L336.3 132.1 L336.8 133.0 L337.4 133.9 L338.1 134.7 L338.8 135.3 L339.4 135.2 L340.1 134.7 L340.7 133.9 L341.2 132.9 L341.7 132.0 L342.2 131.1 L342.5 130.2 L342.8 129.2 L343.2 128.3 L343.6 127.4 L344.1 126.4 L344.7 125.5 L345.4 124.7 L346.1 124.3 L346.7 124.4 L347.3 125.1 L347.8 126.0 L348.2 127.0 L348.6 128.0 L348.8 129.0 L349.1 130.0 L349.3 131.0 L349.5 132.0 L349.7 132.9 L349.9 133.9 L350.0 134.9 L350.2 135.9 L350.4 136.9 L350.5 137.8 L350.7 138.8 L350.9 139.8 L351.1 140.8 L351.2 141.8 L351.4 142.8 L351.6 143.8 L351.7 144.7 L351.9 145.7 L352.1 146.7 L352.2 147.7 L352.4 148.7 L352.6 149.7 L352.7 150.7 L352.9 151.7 L353.0 152.6 L353.2 153.6 L353.3 154.6 L353.5 155.6 L353.6 156.6 L353.8 157.6 L353.9 158.6 L354.1 159.6 L354.2 160.6 L354.3 161.5 L354.5 162.5 L354.6 163.5 L354.7 164.5 L354.8 165.5 L354.9 166.5 L355.0 167.5 L355.0 168.5 L355.1 169.5 L355.2 170.5 L355.3 171.5 L355.3 172.5 L355.4 173.5 L355.4 174.5 L355.5 175.5 L355.6 176.5 L355.6 177.5 L355.7 178.5 L355.7 179.5 L355.8 180.5 L355.8 181.5 L355.9 182.5 L356.0 183.5 L356.0 184.5 L356.1 185.5 L356.2 186.5 L356.3 187.5 L356.4 188.5 L356.5 189.5 L356.6 190.5 L356.7 191.5 L356.8 192.4 L356.9 193.4 L357.0 194.4 L357.2 195.4 L357.3 196.4 L357.5 197.4 L357.7 198.4 L357.8 199.4 L358.0 200.4 L358.2 201.3 L358.3 202.3 L358.5 203.3 L358.7 204.3 L359.0 205.2 L359.3 206.2 L359.6 207.1 L360.0 208.0 L360.4 209.0 L360.9 209.9 L361.5 210.7 L362.2 211.4 L363.0 211.9 L364.0 212.2 L364.9 212.1 L365.9 211.9 L366.9 212.0 L367.7 212.5 L368.3 213.2 L368.9 214.0 L369.4 214.9 L369.8 215.8 L370.1 216.8 L370.4 217.7 L370.8 218.7 L371.1 219.6 L371.4 220.6 L371.7 221.5 L372.0 222.5 L372.3 223.4 L372.6 224.4 L372.9 225.3 L373.1 226.3 L373.4 227.2 L373.7 228.2 L374.0 229.2 L374.3 230.1 L374.6 231.1 L374.9 232.0 L375.4 233.0 L375.9 234.0 L376.5 234.8 L377.2 235.3 L377.9 235.4 L378.7 234.9 L379.5 234.2 L380.2 233.3 L380.8 232.5 L381.3 231.6 L381.7 230.7 L382.3 229.9 L382.9 229.0 L383.7 228.3 L384.5 228.0 L385.2 228.3 L385.9 229.0 L386.5 229.8 L387.1 230.6 L387.7 231.5 L388.2 232.3 L388.8 233.3 L389.4 234.2 L389.9 235.1 L390.5 235.9 L391.0 236.5 L391.6 236.7 L392.1 236.3 L392.5 235.4 L392.9 234.2 L393.2 233.1 L393.4 232.1 L393.6 231.1 L393.9 230.1 L394.1 229.2 L394.2 228.2 L394.4 227.2 L394.6 226.2 L394.8 225.2 L394.9 224.2 L395.1 223.3 L395.2 222.3 L395.4 221.3 L395.6 220.3 L395.7 219.3 L395.9 218.3 L396.0 217.3 L396.1 216.3 L396.3 215.4 L396.4 214.4 L396.6 213.4 L396.7 212.4 L396.9 211.4 L397.0 210.4 L397.2 209.4 L397.3 208.4 L397.5 207.4 L397.6 206.5 L397.8 205.5 L397.9 204.5 L398.1 203.5 L398.2 202.5 L398.4 201.5 L398.5 200.5 L398.7 199.5 L398.8 198.5 L399.0 197.6 L399.1 196.6 L399.3 195.6 L399.4 194.6 L399.6 193.6 L399.7 192.6 L399.9 191.6 L400.0 190.6 L400.1 189.6 L400.3 188.7 L400.4 187.7 L400.5 186.7 L400.7 185.7 L400.8 184.7 L400.9 183.7 L401.0 182.7 L401.1 181.7 L401.2 180.7 L401.3 179.7 L401.3 178.7 L401.4 177.7 L401.5 176.7 L401.6 175.7 L401.7 174.7 L401.7 173.7 L401.8 172.7 L401.9 171.7 L402.0 170.7 L402.0 169.7 L402.1 168.7 L402.2 167.7 L402.3 166.7 L402.4 165.7 L402.5 164.8 L402.6 163.8 L402.7 162.8 L402.8 161.8 L402.9 160.8 L403.0 159.8 L403.1 158.8 L403.3 157.8 L403.5 156.8 L403.7 155.8 L403.9 154.9 L404.1 153.9 L404.3 152.9 L404.6 151.9 L404.8 151.0 L405.1 150.0 L405.4 149.0 L405.6 148.1 L405.9 147.1 L406.3 146.2 L406.7 145.3 L407.2 144.4 L407.7 143.5 L408.4 142.8 L409.2 142.4 L410.2 142.0 L411.1 141.5 L411.8 140.9 L412.5 140.1 L413.1 139.3 L413.7 138.5 L414.2 137.7 L414.6 136.8 L415.0 135.8 L415.3 134.9 L415.6 133.9 L415.9 133.0 L416.2 132.0 L416.5 131.1 L416.8 130.1 L417.1 129.1 L417.4 128.2 L417.6 127.2 L417.9 126.3 L418.2 125.3 L418.5 124.4 L418.8 123.4 L419.1 122.5 L419.4 121.5 L419.7 120.6 L420.1 119.6 L420.4 118.7 L420.7 117.7 L421.1 116.7 L421.7 115.6 L422.3 114.5 L422.9 113.8 L423.5 113.7 L424.1 114.2 L424.6 114.9 L425.1 115.8 L425.6 116.7 L426.1 117.7 L426.6 118.6 L427.0 119.5 L427.4 120.4 L427.9 121.3 L428.3 122.2 L428.8 123.1 L429.3 124.0 L429.9 124.9 L430.6 125.6 L431.4 126.0 L432.2 125.9 L433.1 125.4 L434.0 124.9 L434.9 124.4 L435.8 124.2 L436.7 124.4 L437.4 125.0 L438.0 125.8 L438.4 126.8 L438.8 127.7 L439.2 128.6 L439.6 129.6 L439.9 130.5 L440.2 131.5 L440.4 132.4 L440.7 133.4 L440.9 134.4 L441.1 135.4 L441.3 136.3 L441.5 137.3 L441.8 138.3 L442.0 139.3 L442.2 140.3 L442.3 141.2 L442.5 142.2 L442.7 143.2 L442.8 144.2 L443.0 145.2 L443.1 146.2 L443.3 147.2 L443.4 148.2 L443.5 149.1 L443.7 150.1 L443.8 151.1 L443.9 152.1 L444.0 153.1 L444.2 154.1 L444.3 155.1 L444.4 156.1 L444.5 157.1 L444.6 158.1 L444.7 159.1 L444.8 160.1 L444.9 161.1 L445.0 162.1 L445.1 163.1 L445.2 164.0 L445.3 165.0 L445.4 166.0 L445.5 167.0 L445.6 168.0 L445.6 169.0 L445.7 170.0 L445.8 171.0 L445.9 172.0 L446.0 173.0 L446.0 174.0 L446.1 175.0 L446.2 176.0 L446.3 177.0 L446.4 178.0 L446.4 179.0 L446.5 180.0 L446.6 181.0 L446.7 182.0 L446.8 183.0 L446.9 184.0 L446.9 185.0 L447.0 186.0 L447.1 187.0 L447.2 188.0 L447.3 189.0 L447.4 190.0 L447.5 191.0 L447.6 191.9 L447.7 192.9 L447.8 193.9 L448.0 194.9 L448.1 195.9 L448.2 196.9 L448.3 197.9 L448.5 198.9 L448.6 199.9 L448.8 200.9 L448.9 201.9 L449.0 202.8 L449.2 203.8 L449.4 204.8 L449.5 205.8 L449.7 206.8 L450.0 207.8 L450.2 208.7 L450.5 209.7 L450.7 210.7 L451.0 211.6 L451.3 212.6 L451.6 213.6 L451.8 214.5 L452.2 215.5 L452.5 216.4 L452.9 217.3 L453.4 218.2 L454.0 219.0 L454.7 219.5 L455.7 219.7 L456.7 219.6 L457.7 219.7 L458.6 220.1 L459.4 220.7 L460.0 221.5 L460.5 222.4 L460.9 223.3 L461.2 224.2 L461.5 225.2 L461.8 226.1 L462.1 227.1 L462.4 228.0 L462.7 229.0 L463.0 229.9 L463.4 230.9 L463.7 231.8 L464.0 232.8 L464.3 233.7 L464.6 234.7 L464.9 235.6 L465.3 236.6 L465.6 237.5 L466.1 238.5 L466.7 239.5 L467.5 240.2 L468.2 240.3 L468.8 239.9 L469.4 239.1 L469.9 238.2 L470.4 237.3 L470.8 236.3 L471.2 235.4 L471.6 234.4 L471.9 233.5 L472.2 232.6 L472.5 231.6 L472.9 230.7 L473.3 229.7 L473.7 228.8 L474.2 227.8 L474.8 226.9 L475.4 226.1 L476.0 225.4 L476.7 225.0 L477.4 225.2 L478.2 225.8 L479.0 226.5 L479.9 227.2 L480.8 227.7 L481.7 227.9 L482.6 227.6 L483.2 226.9 L483.8 226.0 L484.2 225.1 L484.4 224.1 L484.7 223.1 L484.9 222.1 L485.1 221.2 L485.3 220.2 L485.5 219.2 L485.7 218.2 L485.8 217.2 L486.0 216.3 L486.2 215.3 L486.3 214.3 L486.5 213.3 L486.6 212.3 L486.8 211.3 L486.9 210.3 L487.1 209.3 L487.2 208.4 L487.3 207.4 L487.5 206.4 L487.6 205.4 L487.7 204.4 L487.9 203.4 L488.0 202.4 L488.1 201.4 L488.3 200.4 L488.5 199.4 L488.6 198.5 L488.8 197.5 L489.0 196.5 L489.1 195.5 L489.3 194.5 L489.5 193.5 L489.7 192.5 L489.8 191.6 L490.0 190.6 L490.2 189.6 L490.3 188.6 L490.4 187.6 L490.6 186.6 L490.7 185.6 L490.8 184.6 L490.9 183.6 L491.0 182.6 L491.1 181.7 L491.2 180.7 L491.3 179.7 L491.4 178.7 L491.4 177.7 L491.5 176.7 L491.6 175.7 L491.7 174.7 L491.7 173.7 L491.8 172.7 L491.9 171.7 L492.0 170.7 L492.0 169.7 L492.1 168.7 L492.2 167.7 L492.3 166.7 L492.4 165.7 L492.5 164.7 L492.6 163.7 L492.7 162.7 L492.8 161.7 L492.9 160.7 L493.0 159.7 L493.1 158.7 L493.3 157.7 L493.4 156.8 L493.6 155.8 L493.8 154.8 L494.0 153.8 L494.2 152.8 L494.4 151.8 L494.6 150.9 L494.8 149.9 L495.0 148.9 L495.2 147.9 L495.4 147.0 L495.6 146.0 L495.8 145.0 L496.1 144.1 L496.4 143.2 L496.8 142.2 L497.4 141.3 L498.0 140.5 L498.9 139.9 L499.8 139.5 L500.7 139.5 L501.5 140.0 L502.4 140.8 L503.2 141.4 L504.0 141.5 L504.8 141.0 L505.5 140.4 L506.1 139.6 L506.6 138.7 L507.0 137.8 L507.4 136.9 L507.8 135.9 L508.2 135.0 L508.5 134.1 L508.9 133.1 L509.3 132.2 L509.6 131.3 L510.0 130.4 L510.4 129.4 L510.7 128.5 L511.1 127.6 L511.5 126.7 L511.9 125.8 L512.3 124.8 L512.9 124.0 L513.5 123.2 L514.3 123.0 L515.1 123.2 L515.8 123.9 L516.4 124.7 L517.0 125.6 L517.5 126.5 L518.0 127.4 L518.3 128.3 L518.7 129.2 L519.2 130.1 L519.8 131.0 L520.5 131.9 L521.3 132.4 L522.0 132.3 L522.7 131.8 L523.3 131.1 L524.0 130.3 L524.7 129.5 L525.3 128.7 L526.0 128.0 L526.8 127.3 L527.5 126.7 L528.3 126.4 L529.3 126.2" stroke="#009898"/>
<path d="M75.2 128.4 L75.5 129.4 L75.8 130.3 L76.1 131.3 L76.3 132.2 L76.6 133.2 L76.8 134.2 L77.0 135.2 L77.1 136.2 L77.3 137.1 L77.5 138.1 L77.7 139.1 L77.8 140.1 L78.0 141.1 L78.1 142.1 L78.3 143.1 L78.4 144.1 L78.6 145.0 L78.7 146.0 L78.9 147.0 L79.1 148.0 L79.2 149.0 L79.4 150.0 L79.5 151.0 L79.7 152.0 L79.8 152.9 L79.9 153.9 L80.1 154.9 L80.2 155.9 L80.4 156.9 L80.5 157.9 L80.7 158.9 L80.8 159.9 L81.0 160.9 L81.1 161.9 L81.2 162.8 L81.4 163.8 L81.5 164.8 L81.6 165.8 L81.8 166.8 L81.9 167.8 L82.0 168.8 L82.2 169.8 L82.3 170.8 L82.4 171.8 L82.5 172.8 L82.7 173.8 L82.8 174.7 L82.9 175.7 L83.0 176.7 L83.2 177.7 L83.3 178.7 L83.4 179.7 L83.5 180.7 L83.7 181.7 L83.8 182.7 L83.9 183.7 L84.1 184.7 L84.2 185.7 L84.3 186.6 L84.5 187.6 L84.6 188.6 L84.7 189.6 L84.9 190.6 L85.0 191.6 L85.2 192.6 L85.4 193.6 L85.5 194.6 L85.7 195.5 L85.8 196.5 L86.0 197.5 L86.2 198.5 L86.3 199.5 L86.5 200.5 L86.7 201.5 L86.9 202.4 L87.0 203.4 L87.2 204.4 L87.4 205.4 L87.6 206.4 L87.8 207.4 L88.0 208.3 L88.2 209.3 L88.4 210.3 L88.6 211.3 L88.8 212.2 L89.1 213.2 L89.4 214.2 L89.7 215.1 L90.0 216.1 L90.3 217.0 L90.6 218.0 L91.0 218.9 L91.3 219.8 L91.7 220.8 L92.1 221.7 L92.5 222.6 L92.9 223.6 L93.2 224.5 L93.6 225.4 L94.0 226.3 L94.3 227.3 L94.7 228.2 L95.0 229.1 L95.4 230.1 L95.7 231.0 L96.1 232.0 L96.4 232.9 L96.7 233.8 L97.1 234.8 L97.4 235.7 L97.8 236.7 L98.1 237.6 L98.5 238.5 L98.9 239.4 L99.3 240.4 L99.7 241.3 L100.1 242.2 L100.5 243.1 L100.9 244.0 L101.4 244.9 L101.8 245.8 L102.3 246.7 L102.7 247.6 L103.3 248.4 L103.8 249.2 L104.5 250.0 L105.2 250.7 L105.9 251.5 L106.8 252.1 L107.6 252.6 L108.5 253.0 L109.5 253.1 L110.4 253.1 L111.4 252.9 L112.4 252.4 L113.3 251.9 L114.1 251.3 L114.9 250.7 L115.5 250.0 L116.2 249.2 L116.7 248.3 L117.2 247.5 L117.7 246.6 L118.2 245.7 L118.6 244.8 L119.0 243.9 L119.3 243.0 L119.7 242.0 L120.0 241.1 L120.3 240.1 L120.6 239.2 L120.9 238.2 L121.2 237.3 L121.5 236.3 L121.8 235.3 L122.0 234.4 L122.2 233.4 L122.4 232.4 L122.6 231.4 L122.8 230.4 L123.0 229.5 L123.2 228.5 L123.4 227.5 L123.5 226.5 L123.7 225.5 L123.9 224.5 L124.1 223.6 L124.2 222.6 L124.4 221.6 L124.5 220.6 L124.7 219.6 L124.8 218.6 L124.9 217.6 L125.1 216.6 L125.2 215.6 L125.3 214.6 L125.4 213.6 L125.6 212.7 L125.7 211.7 L125.8 210.7 L125.9 209.7 L126.1 208.7 L126.2 207.7 L126.3 206.7 L126.4 205.7 L126.5 204.7 L126.6 203.7 L126.7 202.7 L126.8 201.7 L126.9 200.7 L127.0 199.7 L127.1 198.7 L127.2 197.7 L127.3 196.8 L127.4 195.8 L127.5 194.8 L127.6 193.8 L127.7 192.8 L127.8 191.8 L127.9 190.8 L128.0 189.8 L128.1 188.8 L128.3 187.8 L128.4 186.8 L128.5 185.8 L128.7 184.8 L128.8 183.8 L128.9 182.8 L129.0 181.9 L129.2 180.9 L129.3 179.9 L129.4 178.9 L129.6 177.9 L129.7 176.9 L129.8 175.9 L130.0 174.9 L130.1 173.9 L130.2 172.9 L130.3 171.9 L130.4 170.9 L130.6 170.0 L130.7 169.0 L130.8 168.0 L130.9 167.0 L131.0 166.0 L131.2 165.0 L131.3 164.0 L131.4 163.0 L131.5 162.0 L131.6 161.0 L131.8 160.0 L131.9 159.0 L132.0 158.0 L132.2 157.0 L132.3 156.1 L132.4 155.1 L132.6 154.1 L132.7 153.1 L132.9 152.1 L133.0 151.1 L133.2 150.1 L133.3 149.1 L133.5 148.2 L133.7 147.2 L133.8 146.2 L134.0 145.2 L134.1 144.2 L134.3 143.2 L134.5 142.2 L134.7 141.2 L134.8 140.3 L135.0 139.3 L135.2 138.3 L135.4 137.3 L135.6 136.3 L135.8 135.4 L136.0 134.4 L136.2 133.4 L136.5 132.4 L136.7 131.5 L137.0 130.5 L137.3 129.5 L137.6 128.6 L137.9 127.6 L138.2 126.7 L138.5 125.7 L138.8 124.8 L139.1 123.8 L139.5 122.9 L139.8 122.0 L140.2 121.0 L140.6 120.1 L140.9 119.2 L141.3 118.2 L141.7 117.3 L142.2 116.4 L142.6 115.5 L143.0 114.6 L143.5 113.7 L144.0 112.8 L144.4 112.0 L144.9 111.1 L145.4 110.2 L145.9 109.4 L146.5 108.5 L147.0 107.7 L147.6 106.8 L148.1 106.0 L148.7 105.2 L149.3 104.4 L149.9 103.6 L150.5 102.8 L151.1 102.0 L151.8 101.3 L152.4 100.6 L153.1 99.9 L153.9 99.2 L154.8 98.6 L155.7 98.1 L156.6 97.7 L157.6 97.6 L158.5 97.7 L159.4 98.0 L160.3 98.6 L161.1 99.3 L161.7 100.1 L162.3 101.0 L162.7 101.8 L163.1 102.7 L163.4 103.7 L163.8 104.6 L164.1 105.6 L164.4 106.5 L164.7 107.5 L165.0 108.4 L165.2 109.4 L165.5 110.4 L165.7 111.3 L165.9 112.3 L166.1 113.3 L166.3 114.3 L166.5 115.3 L166.6 116.2 L166.8 117.2 L167.0 118.2 L167.1 119.2 L167.3 120.2 L167.4 121.2 L167.6 122.2 L167.7 123.2 L167.8 124.1 L168.0 125.1 L168.1 126.1 L168.3 127.1 L168.4 128.1 L168.5 129.1 L168.7 130.1 L168.8 131.1 L168.9 132.1 L169.1 133.1 L169.2 134.1 L169.3 135.0 L169.5 136.0 L169.6 137.0 L169.7 138.0 L169.8 139.0 L170.0 140.0 L170.1 141.0 L170.2 142.0 L170.4 143.0 L170.5 144.0 L170.6 145.0 L170.7 146.0 L170.9 146.9 L171.0 147.9 L171.1 148.9 L171.2 149.9 L171.3 150.9 L171.5 151.9 L171.6 152.9 L171.7 153.9 L171.8 154.9 L171.9 155.9 L172.1 156.9 L172.2 157.9 L172.3 158.9 L172.4 159.9 L172.5 160.8 L172.7 161.8 L172.8 162.8 L172.9 163.8 L173.0 164.8 L173.2 165.8 L173.3 166.8 L173.4 167.8 L173.6 168.8 L173.7 169.8 L173.8 170.8 L173.9 171.8 L174.1 172.7 L174.2 173.7 L174.3 174.7 L174.5 175.7 L174.6 176.7 L174.7 177.7 L174.9 178.7 L175.0 179.7 L175.1 180.7 L175.2 181.7 L175.4 182.7 L175.5 183.7 L175.6 184.6 L175.8 185.6 L175.9 186.6 L176.0 187.6 L176.1 188.6 L176.3 189.6 L176.4 190.6 L176.5 191.6 L176.6 192.6 L176.7 193.6 L176.8 194.6 L176.9 195.6 L177.0 196.6 L177.1 197.6 L177.2 198.6 L177.3 199.5 L177.4 200.5 L177.5 201.5 L177.6 202.5 L177.8 203.5 L177.9 204.5 L178.0 205.5 L178.1 206.5 L178.2 207.5 L178.4 208.5 L178.5 209.5 L178.6 210.5 L178.7 211.5 L178.9 212.5 L179.0 213.4 L179.2 214.4 L179.3 215.4 L179.4 216.4 L179.6 217.4 L179.8 218.4 L179.9 219.4 L180.1 220.4 L180.3 221.3 L180.5 222.3 L180.7 223.3 L180.9 224.3 L181.1 225.3 L181.3 226.2 L181.5 227.2 L181.8 228.2 L182.0 229.2 L182.3 230.1 L182.5 231.1 L182.8 232.1 L183.0 233.0 L183.3 234.0 L183.6 234.9 L183.9 235.9 L184.2 236.9 L184.5 237.8 L184.8 238.8 L185.1 239.7 L185.4 240.7 L185.7 241.6 L186.0 242.6 L186.3 243.5 L186.7 244.4 L187.1 245.4 L187.4 246.3 L187.8 247.2 L188.2 248.1 L188.6 249.1 L189.1 250.0 L189.5 250.8 L190.0 251.7 L190.6 252.5 L191.2 253.2 L191.8 254.0 L192.6 254.8 L193.4 255.5 L194.3 256.2 L195.2 256.8 L196.1 257.3 L197.0 257.7 L197.9 257.8 L198.8 257.8 L199.6 257.5 L200.5 257.1 L201.4 256.5 L202.2 255.8 L203.0 255.0 L203.7 254.1 L204.2 253.3 L204.7 252.4 L205.2 251.6 L205.6 250.7 L206.0 249.8 L206.3 248.8 L206.7 247.9 L207.1 247.0 L207.4 246.1 L207.8 245.1 L208.1 244.2 L208.5 243.2 L208.8 242.3 L209.1 241.3 L209.4 240.4 L209.6 239.4 L209.9 238.4 L210.1 237.5 L210.4 236.5 L210.6 235.5 L210.9 234.6 L211.1 233.6 L211.3 232.6 L211.5 231.6 L211.7 230.7 L211.9 229.7 L212.1 228.7 L212.3 227.7 L212.5 226.7 L212.7 225.7 L212.8 224.8 L213.0 223.8 L213.2 222.8 L213.4 221.8 L213.5 220.8 L213.7 219.8 L213.9 218.9 L214.0 217.9 L214.2 216.9 L214.3 215.9 L214.5 214.9 L214.6 213.9 L214.8 212.9 L214.9 211.9 L215.1 210.9 L215.2 210.0 L215.4 209.0 L215.5 208.0 L215.7 207.0 L215.8 206.0 L215.9 205.0 L216.1 204.0 L216.2 203.0 L216.4 202.0 L216.5 201.0 L216.6 200.1 L216.8 199.1 L216.9 198.1 L217.1 197.1 L217.2 196.1 L217.3 195.1 L217.5 194.1 L217.6 193.1 L217.7 192.1 L217.9 191.1 L218.0 190.1 L218.1 189.2 L218.2 188.2 L218.3 187.2 L218.5 186.2 L218.6 185.2 L218.7 184.2 L218.8 183.2 L218.9 182.2 L219.0 181.2 L219.1 180.2 L219.2 179.2 L219.3 178.2 L219.4 177.2 L219.4 176.2 L219.5 175.2 L219.6 174.2 L219.7 173.2 L219.8 172.2 L219.9 171.2 L220.0 170.2 L220.1 169.3 L220.2 168.3 L220.2 167.3 L220.3 166.3 L220.4 165.3 L220.5 164.3 L220.6 163.3 L220.7 162.3 L220.8 161.3 L220.9 160.3 L221.0 159.3 L221.2 158.3 L221.3 157.3 L221.4 156.3 L221.5 155.3 L221.7 154.3 L221.8 153.3 L222.0 152.4 L222.1 151.4 L222.2 150.4 L222.4 149.4 L222.6 148.4 L222.7 147.4 L222.9 146.4 L223.1 145.4 L223.2 144.5 L223.4 143.5 L223.6 142.5 L223.9 141.5 L224.1 140.5 L224.3 139.6 L224.6 138.6 L224.9 137.6 L225.2 136.7 L225.5 135.7 L225.8 134.8 L226.1 133.8 L226.4 132.9 L226.8 131.9 L227.1 131.0 L227.5 130.1 L227.8 129.1 L228.2 128.2 L228.5 127.3 L228.9 126.3 L229.3 125.4 L229.6 124.5 L230.0 123.6 L230.4 122.6 L230.8 121.7 L231.2 120.8 L231.5 119.9 L231.9 118.9 L232.3 118.0 L232.7 117.1 L233.1 116.2 L233.5 115.2 L233.9 114.3 L234.3 113.4 L234.7 112.5 L235.1 111.6 L235.5 110.7 L235.9 109.8 L236.3 108.9 L236.8 108.0 L237.2 107.1 L237.7 106.2 L238.2 105.4 L238.8 104.6 L239.5 103.9 L240.3 103.2 L241.1 102.5 L242.0 102.1 L242.9 101.9 L243.8 102.1 L244.7 102.6 L245.5 103.2 L246.2 104.0 L246.8 104.8 L247.4 105.6 L248.0 106.4 L248.5 107.3 L249.0 108.1 L249.6 109.0 L250.1 109.8 L250.6 110.7 L251.1 111.6 L251.6 112.4 L252.1 113.3 L252.6 114.2 L253.1 115.0 L253.5 115.9 L254.0 116.8 L254.4 117.7 L254.8 118.6 L255.2 119.6 L255.5 120.5 L255.8 121.5 L256.1 122.4 L256.4 123.4 L256.7 124.3 L256.9 125.3 L257.1 126.3 L257.4 127.3 L257.6 128.2 L257.7 129.2 L257.9 130.2 L258.1 131.2 L258.2 132.2 L258.4 133.2 L258.5 134.2 L258.7 135.1 L258.9 136.1 L259.0 137.1 L259.2 138.1 L259.3 139.1 L259.5 140.1 L259.6 141.1 L259.8 142.1 L259.9 143.0 L260.1 144.0 L260.3 145.0 L260.4 146.0 L260.6 147.0 L260.8 148.0 L261.0 149.0 L261.1 149.9 L261.3 150.9 L261.5 151.9 L261.6 152.9 L261.8 153.9 L262.0 154.9 L262.2 155.9 L262.3 156.8 L262.5 157.8 L262.7 158.8 L262.8 159.8 L263.0 160.8 L263.1 161.8 L263.3 162.8 L263.4 163.8 L263.5 164.8 L263.7 165.7 L263.8 166.7 L263.9 167.7 L264.0 168.7 L264.1 169.7 L264.2 170.7 L264.3 171.7 L264.4 172.7 L264.6 173.7 L264.7 174.7 L264.8 175.7 L264.9 176.7 L265.0 177.7 L265.1 178.7 L265.2 179.7 L265.3 180.7 L265.4 181.7 L265.5 182.6 L265.6 183.6 L265.8 184.6 L265.9 185.6 L266.0 186.6 L266.2 187.6 L266.3 188.6 L266.4 189.6 L266.6 190.6 L266.7 191.6 L266.9 192.5 L267.1 193.5 L267.2 194.5 L267.4 195.5 L267.5 196.5 L267.7 197.5 L267.9 198.5 L268.0 199.5 L268.2 200.4 L268.4 201.4 L268.5 202.4 L268.7 203.4 L268.9 204.4 L269.0 205.4 L269.2 206.4 L269.3 207.4 L269.4 208.4 L269.6 209.3 L269.7 210.3 L269.9 211.3 L270.1 212.3 L270.3 213.3 L270.6 214.2 L270.9 215.2 L271.2 216.2 L271.5 217.1 L271.9 218.0 L272.2 219.0 L272.6 219.9 L272.9 220.8 L273.3 221.8 L273.6 222.7 L274.0 223.7 L274.3 224.6 L274.7 225.5 L275.0 226.5 L275.4 227.4 L275.7 228.3 L276.0 229.3 L276.4 230.2 L276.7 231.2 L277.1 232.1 L277.4 233.0 L277.7 234.0 L278.1 234.9 L278.4 235.9 L278.8 236.8 L279.1 237.8 L279.4 238.7 L279.8 239.6 L280.1 240.6 L280.4 241.5 L280.8 242.5 L281.1 243.4 L281.4 244.3 L281.8 245.3 L282.2 246.2 L282.7 247.1 L283.1 248.0 L283.6 248.8 L284.1 249.7 L284.6 250.6 L285.1 251.5 L285.6 252.3 L286.2 253.1 L286.9 253.8 L287.7 254.6 L288.5 255.2 L289.4 255.5 L290.3 255.5 L291.2 255.2 L292.1 254.7 L292.9 254.1 L293.7 253.4 L294.5 252.7 L295.2 252.0 L295.9 251.3 L296.6 250.6 L297.2 249.8 L297.8 249.1 L298.4 248.3 L299.0 247.4 L299.6 246.6 L300.1 245.7 L300.5 244.8 L300.9 243.9 L301.3 243.0 L301.7 242.0 L302.0 241.1 L302.3 240.2 L302.6 239.2 L302.8 238.2 L303.0 237.3 L303.3 236.3 L303.5 235.3 L303.7 234.3 L303.9 233.3 L304.1 232.4 L304.3 231.4 L304.4 230.4 L304.6 229.4 L304.8 228.4 L305.0 227.4 L305.2 226.5 L305.3 225.5 L305.5 224.5 L305.6 223.5 L305.8 222.5 L305.9 221.5 L306.1 220.5 L306.2 219.5 L306.4 218.5 L306.5 217.6 L306.6 216.6 L306.8 215.6 L306.9 214.6 L307.0 213.6 L307.2 212.6 L307.3 211.6 L307.4 210.6 L307.5 209.6 L307.7 208.6 L307.8 207.6 L307.9 206.6 L308.0 205.7 L308.1 204.7 L308.2 203.7 L308.3 202.7 L308.4 201.7 L308.5 200.7 L308.6 199.7 L308.7 198.7 L308.8 197.7 L308.9 196.7 L309.0 195.7 L309.1 194.7 L309.2 193.7 L309.3 192.7 L309.4 191.7 L309.5 190.7 L309.6 189.7 L309.7 188.7 L309.8 187.7 L309.9 186.8 L310.0 185.8 L310.2 184.8 L310.3 183.8 L310.4 182.8 L310.5 181.8 L310.6 180.8 L310.7 179.8 L310.8 178.8 L310.9 177.8 L311.0 176.8 L311.1 175.8 L311.2 174.8 L311.3 173.8 L311.4 172.8 L311.5 171.8 L311.6 170.8 L311.8 169.9 L311.9 168.9 L312.0 167.9 L312.1 166.9 L312.2 165.9 L312.3 164.9 L312.5 163.9 L312.6 162.9 L312.7 161.9 L312.8 160.9 L313.0 159.9 L313.1 158.9 L313.3 157.9 L313.4 157.0 L313.6 156.0 L313.7 155.0 L313.9 154.0 L314.1 153.0 L314.3 152.0 L314.5 151.0 L314.6 150.1 L314.8 149.1 L315.0 148.1 L315.2 147.1 L315.4 146.1 L315.5 145.1 L315.7 144.2 L315.9 143.2 L316.1 142.2 L316.3 141.2 L316.5 140.2 L316.7 139.2 L316.8 138.3 L317.0 137.3 L317.3 136.3 L317.5 135.3 L317.7 134.4 L318.0 133.4 L318.2 132.4 L318.5 131.5 L318.8 130.5 L319.0 129.5 L319.3 128.6 L319.6 127.6 L319.9 126.7 L320.2 125.7 L320.6 124.8 L320.9 123.8 L321.2 122.9 L321.5 121.9 L321.9 121.0 L322.2 120.1 L322.6 119.1 L323.0 118.2 L323.4 117.3 L323.7 116.4 L324.1 115.4 L324.5 114.5 L325.0 113.6 L325.4 112.7 L325.8 111.8 L326.2 110.9 L326.7 110.0 L327.1 109.1 L327.6 108.2 L328.0 107.3 L328.5 106.4 L329.0 105.6 L329.5 104.7 L330.0 103.8 L330.5 103.0 L331.1 102.1 L331.6 101.3 L332.3 100.6 L333.0 99.9 L333.8 99.3 L334.7 98.7 L335.6 98.4 L336.6 98.2 L337.6 98.3 L338.5 98.6 L339.4 99.0 L340.3 99.6 L341.1 100.3 L341.7 101.0 L342.3 101.8 L342.9 102.6 L343.4 103.5 L343.9 104.4 L344.3 105.3 L344.7 106.2 L345.1 107.1 L345.4 108.0 L345.7 109.0 L346.0 110.0 L346.3 110.9 L346.5 111.9 L346.8 112.9 L347.0 113.8 L347.3 114.8 L347.5 115.8 L347.7 116.8 L347.9 117.7 L348.0 118.7 L348.2 119.7 L348.4 120.7 L348.5 121.7 L348.7 122.7 L348.8 123.7 L349.0 124.6 L349.2 125.6 L349.3 126.6 L349.5 127.6 L349.6 128.6 L349.8 129.6 L349.9 130.6 L350.1 131.6 L350.2 132.6 L350.4 133.5 L350.5 134.5 L350.6 135.5 L350.8 136.5 L350.9 137.5 L351.1 138.5 L351.2 139.5 L351.4 140.5 L351.5 141.5 L351.7 142.4 L351.8 143.4 L352.0 144.4 L352.1 145.4 L352.2 146.4 L352.4 147.4 L352.5 148.4 L352.7 149.4 L352.8 150.4 L353.0 151.4 L353.1 152.3 L353.2 153.3 L353.4 154.3 L353.5 155.3 L353.7 156.3 L353.8 157.3 L353.9 158.3 L354.0 159.3 L354.2 160.3 L354.3 161.3 L354.4 162.3 L354.5 163.2 L354.6 164.2 L354.8 165.2 L354.9 166.2 L355.0 167.2 L355.1 168.2 L355.2 169.2 L355.3 170.2 L355.4 171.2 L355.5 172.2 L355.6 173.2 L355.8 174.2 L355.9 175.2 L356.0 176.2 L356.1 177.2 L356.2 178.2 L356.3 179.2 L356.4 180.1 L356.5 181.1 L356.6 182.1 L356.7 183.1 L356.8 184.1 L356.9 185.1 L357.0 186.1 L357.1 187.1 L357.2 188.1 L357.3 189.1 L357.4 190.1 L357.5 191.1 L357.6 192.1 L357.7 193.1 L357.8 194.1 L357.9 195.1 L358.0 196.1 L358.1 197.1 L358.2 198.1 L358.3 199.1 L358.4 200.0 L358.5 201.0 L358.6 202.0 L358.7 203.0 L358.8 204.0 L358.9 205.0 L359.1 206.0 L359.2 207.0 L359.4 208.0 L359.5 209.0 L359.7 210.0 L359.9 210.9 L360.1 211.9 L360.3 212.9 L360.5 213.9 L360.7 214.9 L360.9 215.9 L361.1 216.8 L361.3 217.8 L361.5 218.8 L361.7 219.8 L361.9 220.7 L362.1 221.7 L362.3 222.7 L362.6 223.7 L362.8 224.6 L363.1 225.6 L363.3 226.6 L363.5 227.5 L363.8 228.5 L364.1 229.5 L364.3 230.4 L364.6 231.4 L364.9 232.4 L365.2 233.3 L365.5 234.3 L365.8 235.2 L366.1 236.2 L366.4 237.1 L366.8 238.1 L367.1 239.0 L367.4 240.0 L367.8 240.9 L368.2 241.8 L368.6 242.7 L369.0 243.6 L369.4 244.5 L369.8 245.4 L370.3 246.3 L370.7 247.2 L371.2 248.1 L371.7 249.0 L372.2 249.8 L372.7 250.7 L373.2 251.4 L373.9 252.2 L374.6 253.0 L375.3 253.7 L376.2 254.4 L377.1 255.1 L378.0 255.5 L378.9 255.9 L379.8 256.1 L380.7 256.1 L381.6 255.9 L382.6 255.6 L383.5 255.1 L384.3 254.4 L385.1 253.6 L385.8 252.8 L386.4 252.0 L386.9 251.2 L387.4 250.3 L387.8 249.5 L388.2 248.5 L388.6 247.6 L389.0 246.7 L389.4 245.8 L389.8 244.9 L390.2 244.0 L390.6 243.0 L390.9 242.1 L391.2 241.1 L391.5 240.2 L391.8 239.2 L392.0 238.2 L392.3 237.3 L392.6 236.3 L392.8 235.4 L393.1 234.4 L393.3 233.4 L393.5 232.4 L393.7 231.5 L393.9 230.5 L394.1 229.5 L394.3 228.5 L394.5 227.5 L394.6 226.5 L394.8 225.6 L395.0 224.6 L395.1 223.6 L395.3 222.6 L395.5 221.6 L395.7 220.6 L395.8 219.6 L396.0 218.7 L396.1 217.7 L396.3 216.7 L396.5 215.7 L396.6 214.7 L396.8 213.7 L396.9 212.7 L397.1 211.7 L397.2 210.8 L397.4 209.8 L397.6 208.8 L397.7 207.8 L397.9 206.8 L398.0 205.8 L398.2 204.8 L398.3 203.8 L398.5 202.8 L398.6 201.9 L398.7 200.9 L398.9 199.9 L399.0 198.9 L399.1 197.9 L399.3 196.9 L399.4 195.9 L399.5 194.9 L399.6 193.9 L399.7 192.9 L399.9 191.9 L400.0 190.9 L400.1 190.0 L400.2 189.0 L400.3 188.0 L400.4 187.0 L400.5 186.0 L400.6 185.0 L400.7 184.0 L400.8 183.0 L400.9 182.0 L401.0 181.0 L401.1 180.0 L401.2 179.0 L401.3 178.0 L401.3 177.0 L401.4 176.0 L401.5 175.0 L401.6 174.0 L401.7 173.0 L401.8 172.0 L401.8 171.0 L401.9 170.0 L402.0 169.0 L402.1 168.0 L402.2 167.0 L402.3 166.1 L402.4 165.1 L402.5 164.1 L402.6 163.1 L402.7 162.1 L402.8 161.1 L403.0 160.1 L403.1 159.1 L403.2 158.1 L403.4 157.1 L403.5 156.1 L403.7 155.1 L403.9 154.2 L404.0 153.2 L404.2 152.2 L404.4 151.2 L404.6 150.2 L404.8 149.2 L405.0 148.3 L405.2 147.3 L405.4 146.3 L405.6 145.3 L405.8 144.3 L406.0 143.4 L406.2 142.4 L406.5 141.4 L406.7 140.4 L406.9 139.5 L407.2 138.5 L407.4 137.5 L407.7 136.6 L408.0 135.6 L408.3 134.7 L408.6 133.7 L408.9 132.7 L409.2 131.8 L409.5 130.8 L409.8 129.9 L410.1 128.9 L410.4 128.0 L410.7 127.0 L411.1 126.1 L411.4 125.2 L411.7 124.2 L412.1 123.3 L412.4 122.3 L412.8 121.4 L413.1 120.5 L413.5 119.5 L413.9 118.6 L414.2 117.7 L414.6 116.8 L415.1 115.9 L415.5 115.0 L415.9 114.0 L416.3 113.1 L416.8 112.2 L417.3 111.4 L417.8 110.5 L418.3 109.7 L418.9 108.8 L419.4 108.0 L420.0 107.2 L420.7 106.4 L421.4 105.7 L422.1 105.1 L423.0 104.5 L423.9 104.0 L424.8 103.7 L425.8 103.7 L426.7 103.9 L427.7 104.2 L428.6 104.7 L429.4 105.3 L430.2 106.0 L430.9 106.7 L431.6 107.4 L432.2 108.2 L432.8 109.0 L433.4 109.8 L434.0 110.6 L434.5 111.4 L435.1 112.3 L435.6 113.1 L436.1 114.0 L436.5 114.9 L437.0 115.8 L437.4 116.7 L437.7 117.6 L438.1 118.6 L438.4 119.5 L438.6 120.5 L438.9 121.5 L439.1 122.4 L439.4 123.4 L439.6 124.4 L439.8 125.4 L440.0 126.4 L440.2 127.3 L440.4 128.3 L440.6 129.3 L440.7 130.3 L440.9 131.3 L441.0 132.3 L441.2 133.2 L441.4 134.2 L441.5 135.2 L441.7 136.2 L441.8 137.2 L442.0 138.2 L442.1 139.2 L442.3 140.2 L442.4 141.2 L442.5 142.1 L442.7 143.1 L442.8 144.1 L442.9 145.1 L443.1 146.1 L443.2 147.1 L443.3 148.1 L443.5 149.1 L443.6 150.1 L443.7 151.1 L443.8 152.1 L444.0 153.1 L444.1 154.0 L444.2 155.0 L444.3 156.0 L444.5 157.0 L444.6 158.0 L444.7 159.0 L444.8 160.0 L445.0 161.0 L445.1 162.0 L445.2 163.0 L445.3 164.0 L445.4 165.0 L445.5 166.0 L445.7 166.9 L445.8 167.9 L445.9 168.9 L446.0 169.9 L446.1 170.9 L446.2 171.9 L446.3 172.9 L446.4 173.9 L446.6 174.9 L446.7 175.9 L446.8 176.9 L446.9 177.9 L447.0 178.9 L447.1 179.9 L447.2 180.9 L447.3 181.9 L447.5 182.8 L447.6 183.8 L447.7 184.8 L447.8 185.8 L447.9 186.8 L448.0 187.8 L448.2 188.8 L448.3 189.8 L448.4 190.8 L448.5 191.8 L448.7 192.8 L448.8 193.8 L449.0 194.8 L449.1 195.7 L449.3 196.7 L449.5 197.7 L449.6 198.7 L449.8 199.7 L450.0 200.7 L450.2 201.6 L450.4 202.6 L450.5 203.6 L450.7 204.6 L450.9 205.6 L451.1 206.6 L451.3 207.5 L451.5 208.5 L451.7 209.5 L452.0 210.5 L452.2 211.5 L452.4 212.4 L452.7 213.4 L453.0 214.4 L453.3 215.3 L453.6 216.3 L453.9 217.2 L454.2 218.2 L454.5 219.1 L454.8 220.1 L455.1 221.0 L455.4 222.0 L455.8 222.9 L456.1 223.9 L456.4 224.8 L456.7 225.7 L457.0 226.7 L457.4 227.6 L457.7 228.6 L458.0 229.5 L458.3 230.5 L458.6 231.4 L458.9 232.4 L459.3 233.3 L459.6 234.3 L459.9 235.2 L460.2 236.2 L460.5 237.1 L460.9 238.1 L461.2 239.0 L461.5 240.0 L461.9 240.9 L462.2 241.8 L462.6 242.8 L462.9 243.7 L463.3 244.6 L463.6 245.6 L464.0 246.5 L464.3 247.4 L464.7 248.4 L465.1 249.3 L465.5 250.2 L466.0 251.1 L466.4 251.9 L466.9 252.8 L467.5 253.7 L468.2 254.5 L468.9 255.3 L469.7 255.9 L470.6 256.3 L471.5 256.4 L472.4 256.3 L473.4 255.9 L474.3 255.4 L475.1 254.7 L475.8 254.0 L476.5 253.3 L477.2 252.6 L477.9 251.8 L478.5 251.1 L479.1 250.3 L479.7 249.4 L480.2 248.6 L480.7 247.8 L481.2 246.9 L481.7 246.0 L482.1 245.1 L482.5 244.2 L482.9 243.2 L483.2 242.3 L483.5 241.3 L483.8 240.4 L484.1 239.4 L484.4 238.5 L484.6 237.5 L484.9 236.5 L485.1 235.5 L485.3 234.6 L485.6 233.6 L485.8 232.6 L486.0 231.6 L486.2 230.7 L486.4 229.7 L486.5 228.7 L486.7 227.7 L486.8 226.7 L487.0 225.7 L487.1 224.7 L487.3 223.8 L487.4 222.8 L487.6 221.8 L487.7 220.8 L487.9 219.8 L488.0 218.8 L488.1 217.8 L488.2 216.8 L488.4 215.8 L488.5 214.8 L488.6 213.8 L488.7 212.8 L488.8 211.9 L488.9 210.9 L489.0 209.9 L489.1 208.9 L489.2 207.9 L489.3 206.9 L489.3 205.9 L489.4 204.9 L489.5 203.9 L489.6 202.9 L489.6 201.9 L489.7 200.9 L489.8 199.9 L489.9 198.9 L489.9 197.9 L490.0 196.9 L490.1 195.9 L490.2 194.9 L490.2 193.9 L490.3 192.9 L490.4 191.9 L490.5 190.9 L490.6 189.9 L490.7 188.9 L490.8 187.9 L490.9 186.9 L491.0 185.9 L491.1 185.0 L491.2 184.0 L491.3 183.0 L491.4 182.0 L491.5 181.0 L491.6 180.0 L491.7 179.0 L491.9 178.0 L492.0 177.0 L492.1 176.0 L492.2 175.0 L492.3 174.0 L492.4 173.0 L492.5 172.0 L492.7 171.0 L492.8 170.0 L492.9 169.1 L493.0 168.1 L493.1 167.1 L493.3 166.1 L493.4 165.1 L493.5 164.1 L493.6 163.1 L493.8 162.1 L493.9 161.1 L494.0 160.1 L494.2 159.1 L494.3 158.1 L494.5 157.2 L494.6 156.2 L494.8 155.2 L494.9 154.2 L495.1 153.2 L495.3 152.2 L495.4 151.2 L495.6 150.2 L495.8 149.3 L496.0 148.3 L496.1 147.3 L496.3 146.3 L496.5 145.3 L496.7 144.3 L496.9 143.4 L497.1 142.4 L497.3 141.4 L497.5 140.4 L497.7 139.5 L498.0 138.5 L498.2 137.5 L498.4 136.5 L498.7 135.6 L498.9 134.6 L499.2 133.6 L499.5 132.7 L499.7 131.7 L500.0 130.8 L500.3 129.8 L500.6 128.8 L501.0 127.9 L501.3 127.0 L501.6 126.0 L501.9 125.1 L502.3 124.1 L502.6 123.2 L503.0 122.2 L503.3 121.3 L503.6 120.4 L504.0 119.4 L504.3 118.5 L504.7 117.5 L505.0 116.6 L505.4 115.7 L505.8 114.8 L506.1 113.8 L506.5 112.9 L506.9 112.0 L507.3 111.0 L507.7 110.1 L508.0 109.2 L508.4 108.3 L508.8 107.4 L509.2 106.4 L509.7 105.5 L510.1 104.7 L510.6 103.8 L511.0 102.9 L511.5 102.0 L512.0 101.1 L512.6 100.3 L513.2 99.6 L514.0 98.9 L514.8 98.3 L515.7 97.8 L516.7 97.6 L517.6 97.7 L518.5 98.0 L519.4 98.5 L520.2 99.2 L521.0 100.0 L521.6 100.7 L522.2 101.5 L522.7 102.3 L523.2 103.2 L523.7 104.0 L524.2 104.9 L524.7 105.8 L525.2 106.7 L525.6 107.6 L526.0 108.5 L526.4 109.4 L526.8 110.3 L527.2 111.3 L527.5 112.2 L527.9 113.1 L528.2 114.1 L528.5 115.0 L528.8 116.0 L529.0 116.9 L529.3 117.9" stroke="#bb8c00" stroke-dasharray="1.6 2.4" stroke-linecap="butt"/>
</g>
<rect x="22" y="340" width="100" height="9" fill="#f0f0f0" />
<line x1="22" y1="340.4" x2="122" y2="340.4" stroke="#d4d4d4" stroke-width="0.8" />
<line x1="22.4" y1="340" x2="22.4" y2="349" stroke="#d4d4d4" stroke-width="0.8" />
<line x1="22" y1="348.6" x2="122" y2="348.6" stroke="#ffffff" stroke-width="0.8" />
<line x1="121.6" y1="340" x2="121.6" y2="349" stroke="#ffffff" stroke-width="0.8" />
<rect x="122.8" y="340" width="418.40000000000003" height="9" fill="#f0f0f0" />
<line x1="122.8" y1="340.4" x2="541.2" y2="340.4" stroke="#d4d4d4" stroke-width="0.8" />
<line x1="123.2" y1="340" x2="123.2" y2="349" stroke="#d4d4d4" stroke-width="0.8" />
<line x1="122.8" y1="348.6" x2="541.2" y2="348.6" stroke="#ffffff" stroke-width="0.8" />
<line x1="540.8000000000001" y1="340" x2="540.8000000000001" y2="349" stroke="#ffffff" stroke-width="0.8" />
<text x="25.7" y="347.3" font-size="7.6" fill="#222" textLength="49.2" lengthAdjust="spacingAndGlyphs" >[ X:4.80, Y:1.70 ]</text>
<text x="124.8" y="347.3" font-size="7.6" fill="#222" textLength="127.6" lengthAdjust="spacingAndGlyphs" >MinY:-0.080, MaxY:1.566, Peak-Peak:1.646</text>
<rect x="550.5" y="44.5" width="124" height="39" fill="none" stroke="#d5d5d5" stroke-width="1"/>
<rect x="551.5" y="45.5" width="124" height="39" fill="none" stroke="#ffffff" stroke-width="1" opacity="0.9"/>
<rect x="550.5" y="44.5" width="124" height="39" fill="none" stroke="#bdbdbd" stroke-width="1"/>
<rect x="554" y="40" width="67" height="8" fill="#f0f0f0" />
<text x="555.6" y="46.6" font-size="7.6" fill="#1c1c30" textLength="63.8" lengthAdjust="spacingAndGlyphs" >Node Selection Mode</text>
<circle cx="560.3" cy="54.2" r="2.9" fill="#fff"/>
<path d="M558.25 56.25 A2.9 2.9 0 0 1 562.35 52.15" fill="none" stroke="#4a4a4a" stroke-width="1"/>
<path d="M562.35 52.15 A2.9 2.9 0 0 1 558.25 56.25" fill="none" stroke="#ffffff" stroke-width="0.9"/>
<circle cx="560.3" cy="54.2" r="1.2" fill="#111"/>
<circle cx="560.3" cy="64.6" r="2.9" fill="#f0f0f0"/>
<path d="M558.25 66.65 A2.9 2.9 0 0 1 562.35 62.55" fill="none" stroke="#8e8e8e" stroke-width="1"/>
<path d="M562.35 62.55 A2.9 2.9 0 0 1 558.25 66.65" fill="none" stroke="#ffffff" stroke-width="0.9"/>
<circle cx="560.3" cy="75" r="2.9" fill="#f0f0f0"/>
<path d="M558.25 77.05 A2.9 2.9 0 0 1 562.35 72.95" fill="none" stroke="#8e8e8e" stroke-width="1"/>
<path d="M562.35 72.95 A2.9 2.9 0 0 1 558.25 77.05" fill="none" stroke="#ffffff" stroke-width="0.9"/>
<text x="566.6" y="57.0" font-size="7.6" fill="#111" textLength="47.6" lengthAdjust="spacingAndGlyphs" >Individual nodes</text>
<text x="566.6" y="67.3" font-size="7.6" fill="#a6a6a6" textLength="51.7" lengthAdjust="spacingAndGlyphs" >Single input node</text>
<text x="566.6" y="77.7" font-size="7.6" fill="#a6a6a6" textLength="92.8" lengthAdjust="spacingAndGlyphs" >All input nodes in a component</text>
<rect x="551" y="86" width="124" height="254.3" fill="#fff" />
<line x1="550.8" y1="86.4" x2="675" y2="86.4" stroke="#858585" stroke-width="0.9" />
<line x1="551.4" y1="86" x2="551.4" y2="340.3" stroke="#858585" stroke-width="0.9" />
<line x1="552" y1="87.3" x2="675" y2="87.3" stroke="#d0d0d0" stroke-width="0.8" />
<rect x="550.5" y="340.3" width="125" height="1" fill="#f8f8f8" />
<line x1="556.5" y1="102.6" x2="556.5" y2="104.5" stroke="#b0b0b0" stroke-width="0.7" />
<line x1="558.8" y1="100.3" x2="563" y2="100.3" stroke="#b0b0b0" stroke-width="0.7" stroke-dasharray="0.8 0.8"/>
<line x1="566.6" y1="103.6" x2="566.6" y2="126.5" stroke="#b8b8b8" stroke-width="0.7" stroke-dasharray="0.8 0.8"/>
<line x1="569" y1="108.9" x2="573.5" y2="108.9" stroke="#b8b8b8" stroke-width="0.7" stroke-dasharray="0.8 0.8"/>
<line x1="569" y1="117.7" x2="573.5" y2="117.7" stroke="#b8b8b8" stroke-width="0.7" stroke-dasharray="0.8 0.8"/>
<line x1="569" y1="126.5" x2="573.5" y2="126.5" stroke="#b8b8b8" stroke-width="0.7" stroke-dasharray="0.8 0.8"/>
<rect x="553.4" y="88.4" width="6.2" height="6.2" fill="#fff" stroke="#333" stroke-width="0.9"/>
<path d="M554.6 91.4 L555.9 93.0 L558.5 89.8" fill="none" stroke="#111" stroke-width="1"/>
<text x="571.8" y="94.1" font-size="7.6" fill="#111" textLength="29.2" lengthAdjust="spacingAndGlyphs" >MCU_AA4</text>
<rect x="554.3" y="98.1" width="4.4" height="4.4" fill="#fff" stroke="#8c8c8c" stroke-width="0.7"/>
<path d="M555.3 100.3 H557.7" stroke="#333" stroke-width="0.7"/>
<rect x="563.6" y="97.2" width="6.2" height="6.2" fill="#fff" stroke="#333" stroke-width="0.9"/>
<path d="M564.8 100.2 L566.1 101.8 L568.7 98.6" fill="none" stroke="#111" stroke-width="1"/>
<text x="582.2" y="102.9" font-size="7.6" fill="#111" textLength="29.3" lengthAdjust="spacingAndGlyphs" >MCU_AA4</text>
<rect x="564.4" y="106.7" width="4.4" height="4.4" fill="#fff" stroke="#8c8c8c" stroke-width="0.7"/>
<path d="M565.4 108.9 H567.8" stroke="#333" stroke-width="0.7"/>
<path d="M566.6 107.7 V110.1" stroke="#333" stroke-width="0.7"/>
<rect x="573.9" y="105.8" width="6.2" height="6.2" fill="#fff" stroke="#333" stroke-width="0.9"/>
<path d="M575.1 108.8 L576.4 110.4 L579.0 107.2" fill="none" stroke="#111" stroke-width="1"/>
<rect x="582.2" y="105.2" width="7.3" height="7.4" fill="#ff0000" />
<text x="593.1" y="111.8" font-size="7.6" fill="#111" textLength="29.2" lengthAdjust="spacingAndGlyphs" >U1_H5(o)</text>
<rect x="564.4" y="115.5" width="4.4" height="4.4" fill="#fff" stroke="#8c8c8c" stroke-width="0.7"/>
<path d="M565.4 117.7 H567.8" stroke="#333" stroke-width="0.7"/>
<path d="M566.6 116.5 V118.9" stroke="#333" stroke-width="0.7"/>
<rect x="573.9" y="114.6" width="6.2" height="6.2" fill="#fff" stroke="#333" stroke-width="0.9"/>
<path d="M575.1 117.6 L576.4 119.2 L579.0 116.0" fill="none" stroke="#111" stroke-width="1"/>
<rect x="582.2" y="114.0" width="7.3" height="7.4" fill="#00c0c0" />
<text x="593.1" y="120.6" font-size="7.6" fill="#111" textLength="33.8" lengthAdjust="spacingAndGlyphs" >U204_P8(i)</text>
<rect x="564.4" y="124.3" width="4.4" height="4.4" fill="#fff" stroke="#8c8c8c" stroke-width="0.7"/>
<path d="M565.4 126.5 H567.8" stroke="#333" stroke-width="0.7"/>
<path d="M566.6 125.3 V127.7" stroke="#333" stroke-width="0.7"/>
<rect x="573.9" y="123.4" width="6.2" height="6.2" fill="#fff" stroke="#333" stroke-width="0.9"/>
<path d="M575.1 126.4 L576.4 128.0 L579.0 124.8" fill="none" stroke="#111" stroke-width="1"/>
<rect x="582.2" y="122.8" width="7.3" height="7.4" fill="#ffc000" />
<text x="593.1" y="129.4" font-size="7.6" fill="#111" textLength="33.8" lengthAdjust="spacingAndGlyphs" >U205_P8(i)</text>
<rect x="550" y="343.1" width="126.39999999999998" height="13.399999999999977" fill="#f0f0f0" />
<line x1="550" y1="343.6" x2="676.4" y2="343.6" stroke="#8a8a8a" stroke-width="1" />
<line x1="550.5" y1="343.1" x2="550.5" y2="356.5" stroke="#8a8a8a" stroke-width="1" />
<line x1="551" y1="344.6" x2="675.4" y2="344.6" stroke="#fff" stroke-width="1" />
<line x1="551.5" y1="344.1" x2="551.5" y2="355.5" stroke="#fff" stroke-width="1" />
<line x1="550" y1="356.0" x2="676.4" y2="356.0" stroke="#686868" stroke-width="1" />
<line x1="675.9" y1="343.1" x2="675.9" y2="356.5" stroke="#686868" stroke-width="1" />
<line x1="551" y1="355.0" x2="675.4" y2="355.0" stroke="#b0b0b0" stroke-width="1" />
<line x1="674.9" y1="344.1" x2="674.9" y2="355.5" stroke="#b0b0b0" stroke-width="1" />
<text x="594.4" y="352.6" font-size="7.6" fill="#000" textLength="37.4" lengthAdjust="spacingAndGlyphs" >View Option</text>
<rect x="12.1" y="381.3" width="47.9" height="13.5" fill="#f0f0f0" />
<rect x="12.6" y="381.8" width="46.9" height="12.5" fill="none" stroke="#5a5a5a" stroke-width="1"/>
<line x1="13.6" y1="393.3" x2="58.5" y2="393.3" stroke="#8a8a8a" stroke-width="1" />
<line x1="58.5" y1="382.8" x2="58.5" y2="393.3" stroke="#8a8a8a" stroke-width="1" />
<line x1="13.6" y1="382.8" x2="58.5" y2="382.8" stroke="#fff" stroke-width="1" />
<line x1="13.6" y1="382.8" x2="13.6" y2="393.3" stroke="#fff" stroke-width="1" />
<text x="28.0" y="390.8" font-size="7.6" fill="#000" textLength="16.4" lengthAdjust="spacingAndGlyphs" >Open</text>
<rect x="64.6" y="381.3" width="48.10000000000001" height="13.300000000000011" fill="#f0f0f0" />
<line x1="64.6" y1="381.8" x2="112.7" y2="381.8" stroke="#fff" stroke-width="1" />
<line x1="65.1" y1="381.3" x2="65.1" y2="394.6" stroke="#fff" stroke-width="1" />
<line x1="64.6" y1="394.20000000000005" x2="112.7" y2="394.20000000000005" stroke="#6a6a6a" stroke-width="0.8" />
<line x1="112.3" y1="381.3" x2="112.3" y2="394.6" stroke="#6a6a6a" stroke-width="0.8" />
<line x1="65.6" y1="393.40000000000003" x2="111.9" y2="393.40000000000003" stroke="#a8a8a8" stroke-width="0.8" />
<line x1="111.5" y1="382.3" x2="111.5" y2="393.8" stroke="#a8a8a8" stroke-width="0.8" />
<text x="81.4" y="390.8" font-size="7.6" fill="#000" textLength="14.2" lengthAdjust="spacingAndGlyphs" >Save</text>
<rect x="117.6" y="381.3" width="48.400000000000006" height="13.300000000000011" fill="#f0f0f0" />
<line x1="117.6" y1="381.8" x2="166" y2="381.8" stroke="#fff" stroke-width="1" />
<line x1="118.1" y1="381.3" x2="118.1" y2="394.6" stroke="#fff" stroke-width="1" />
<line x1="117.6" y1="394.20000000000005" x2="166" y2="394.20000000000005" stroke="#6a6a6a" stroke-width="0.8" />
<line x1="165.6" y1="381.3" x2="165.6" y2="394.6" stroke="#6a6a6a" stroke-width="0.8" />
<line x1="118.6" y1="393.40000000000003" x2="165.2" y2="393.40000000000003" stroke="#a8a8a8" stroke-width="0.8" />
<line x1="164.8" y1="382.3" x2="164.8" y2="393.8" stroke="#a8a8a8" stroke-width="0.8" />
<text x="129.8" y="390.7" font-size="7.6" fill="#000" textLength="23.2" lengthAdjust="spacingAndGlyphs" >Save As</text>
<rect x="170.3" y="381.3" width="47.69999999999999" height="13.300000000000011" fill="#f0f0f0" />
<line x1="170.3" y1="381.8" x2="218" y2="381.8" stroke="#fff" stroke-width="1" />
<line x1="170.8" y1="381.3" x2="170.8" y2="394.6" stroke="#fff" stroke-width="1" />
<line x1="170.3" y1="394.20000000000005" x2="218" y2="394.20000000000005" stroke="#6a6a6a" stroke-width="0.8" />
<line x1="217.6" y1="381.3" x2="217.6" y2="394.6" stroke="#6a6a6a" stroke-width="0.8" />
<line x1="171.3" y1="393.40000000000003" x2="217.2" y2="393.40000000000003" stroke="#a8a8a8" stroke-width="0.8" />
<line x1="216.8" y1="382.3" x2="216.8" y2="393.8" stroke="#a8a8a8" stroke-width="0.8" />
<text x="176.7" y="390.7" font-size="7.6" fill="#000" textLength="35.0" lengthAdjust="spacingAndGlyphs" >Save Image</text>
<rect x="412.5" y="381.3" width="40.69999999999999" height="13.300000000000011" fill="#f0f0f0" />
<line x1="412.5" y1="381.8" x2="453.2" y2="381.8" stroke="#fff" stroke-width="1" />
<line x1="413.0" y1="381.3" x2="413.0" y2="394.6" stroke="#fff" stroke-width="1" />
<line x1="412.5" y1="394.20000000000005" x2="453.2" y2="394.20000000000005" stroke="#6a6a6a" stroke-width="0.8" />
<line x1="452.8" y1="381.3" x2="452.8" y2="394.6" stroke="#6a6a6a" stroke-width="0.8" />
<line x1="413.5" y1="393.40000000000003" x2="452.4" y2="393.40000000000003" stroke="#a8a8a8" stroke-width="0.8" />
<line x1="452.0" y1="382.3" x2="452.0" y2="393.8" stroke="#a8a8a8" stroke-width="0.8" />
<text x="418.2" y="390.7" font-size="7.6" fill="#000" textLength="30.0" lengthAdjust="spacingAndGlyphs" >Find Node</text>
<rect x="454.4" y="381.3" width="54.200000000000045" height="13.300000000000011" fill="#f0f0f0" />
<line x1="454.4" y1="381.8" x2="508.6" y2="381.8" stroke="#fff" stroke-width="1" />
<line x1="454.9" y1="381.3" x2="454.9" y2="394.6" stroke="#fff" stroke-width="1" />
<line x1="454.4" y1="394.20000000000005" x2="508.6" y2="394.20000000000005" stroke="#6a6a6a" stroke-width="0.8" />
<line x1="508.20000000000005" y1="381.3" x2="508.20000000000005" y2="394.6" stroke="#6a6a6a" stroke-width="0.8" />
<line x1="455.4" y1="393.40000000000003" x2="507.8" y2="393.40000000000003" stroke="#a8a8a8" stroke-width="0.8" />
<line x1="507.40000000000003" y1="382.3" x2="507.40000000000003" y2="393.8" stroke="#a8a8a8" stroke-width="0.8" />
<text x="458.2" y="390.7" font-size="7.6" fill="#000" textLength="46.1" lengthAdjust="spacingAndGlyphs" >Clear Find Node</text>
<rect x="458.7" y="370.7" width="102.30000000000001" height="9.5" fill="#f0f0f0" />
<line x1="458.7" y1="371.2" x2="561" y2="371.2" stroke="#fff" stroke-width="1" />
<line x1="459.2" y1="370.7" x2="459.2" y2="380.2" stroke="#fff" stroke-width="1" />
<line x1="458.7" y1="379.8" x2="561" y2="379.8" stroke="#6a6a6a" stroke-width="0.8" />
<line x1="560.6" y1="370.7" x2="560.6" y2="380.2" stroke="#6a6a6a" stroke-width="0.8" />
<line x1="459.7" y1="379.0" x2="560.2" y2="379.0" stroke="#a8a8a8" stroke-width="0.8" />
<line x1="559.8" y1="371.7" x2="559.8" y2="379.4" stroke="#a8a8a8" stroke-width="0.8" />
<text x="463.7" y="377.4" font-size="7.6" fill="#000" textLength="92.3" lengthAdjust="spacingAndGlyphs" >Display Signal Group Waveform</text>
<rect x="629.3" y="381.3" width="48.60000000000002" height="13.699999999999989" fill="#f0f0f0" />
<line x1="629.3" y1="381.8" x2="677.9" y2="381.8" stroke="#fff" stroke-width="1" />
<line x1="629.8" y1="381.3" x2="629.8" y2="395" stroke="#fff" stroke-width="1" />
<line x1="629.3" y1="394.6" x2="677.9" y2="394.6" stroke="#6a6a6a" stroke-width="0.8" />
<line x1="677.5" y1="381.3" x2="677.5" y2="395" stroke="#6a6a6a" stroke-width="0.8" />
<line x1="630.3" y1="393.8" x2="677.1" y2="393.8" stroke="#a8a8a8" stroke-width="0.8" />
<line x1="676.6999999999999" y1="382.3" x2="676.6999999999999" y2="394.2" stroke="#a8a8a8" stroke-width="0.8" />
<text x="645.6" y="390.7" font-size="7.6" fill="#000" textLength="15.4" lengthAdjust="spacingAndGlyphs" >Close</text>
</svg>
</body></html>
